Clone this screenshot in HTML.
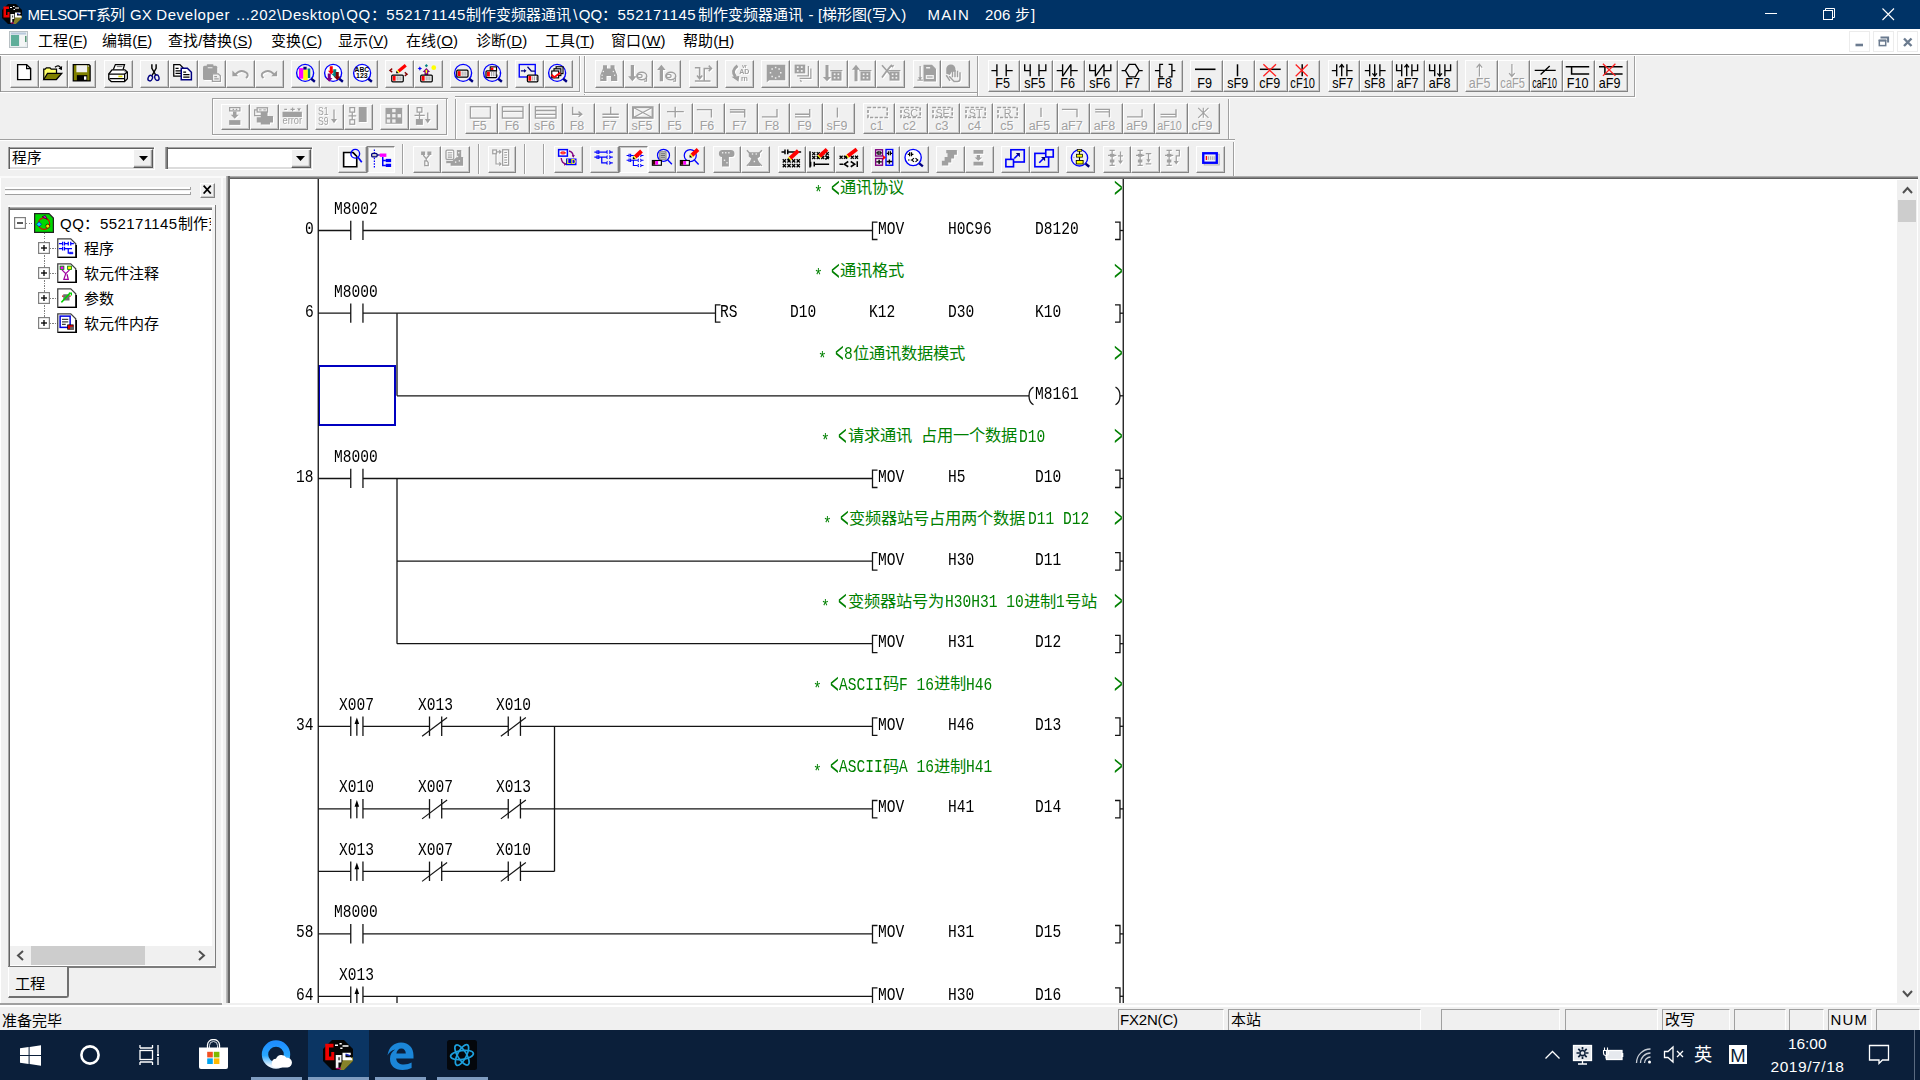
<!DOCTYPE html>
<html lang="zh-CN">
<head>
<meta charset="utf-8">
<title>MELSOFT GX Developer</title>
<style>
html,body{margin:0;padding:0;}
body{width:1920px;height:1080px;position:relative;overflow:hidden;background:#f0f0f0;font-family:"Liberation Sans",sans-serif;font-size:15px;color:#000;}
div,span,svg{position:absolute;box-sizing:border-box;}
.l{overflow:hidden}
.t{white-space:pre;line-height:1;}
.u{position:static;text-decoration:underline;}
.b{border-top:1px solid #fff;border-left:1px solid #fff;border-right:1px solid #848484;border-bottom:1px solid #848484;background:#f0f0f0;box-shadow:inset -1px -1px 0 #c6c6c6;}
.b.p{border-top:1px solid #848484;border-left:1px solid #848484;border-right:1px solid #fff;border-bottom:1px solid #fff;background:#f8f8f8;box-shadow:inset 1px 1px 0 #c6c6c6;}
.i{overflow:visible}
.b.p .i{transform:translate(1.25px,1.25px)}
.em{filter:drop-shadow(1.1px 1.1px 0 #fff)}
.lb{font-family:"Liberation Sans",sans-serif;line-height:1;white-space:pre;text-align:center;transform-origin:50% 50%}
.m{font-family:"Liberation Mono",monospace;font-size:17.6px;line-height:1;white-space:pre;transform-origin:0 0;transform:scaleX(0.8286);color:#000}
.c{font-family:"Liberation Serif",serif;font-size:16.25px;line-height:1;white-space:pre;}
.g{color:#008000}
.ui{font-size:15px;line-height:1;white-space:pre;}
.pane{border-top:1.25px solid #a0a0a0;border-left:1.25px solid #a0a0a0;border-right:1.25px solid #fff;border-bottom:0;}
</style>
</head>
<body>
<div class="" style="left:0px;top:0px;width:1920px;height:29px;background:#003366"></div>
<svg style="left:2px;top:4px" width="20" height="20" viewBox="0 0 20 20"><path d="M6 0h8l6 6v8l-6 6H6l-6-6V6z" fill="#050505"/><path d="M13.500 12.500l6.500-1v2.500l-6 6h-3z" fill="#86822a"/><path d="M1.500 2.500h5.500v2.500h-3v6h1.500v-3h2v5.500h-6z" fill="#f00000"/><path d="M8.500 10h3.800v5h-2v3.800h-1.800zM10.300 11.500v2h.8v-2z" fill="#f4f4f4"/><path d="M13 8.500h5.500v1.500h-3.500v1.500h3.500l1 1v1h-6.500z" fill="#fff"/><path d="M8 3.500h2M11 2.500h1.500M13 4h4M11.500 5.500h1.500" stroke="#fff" stroke-width="1.100"/><path d="M9 18.500h3v1h-3z" fill="#c00070"/><path d="M15 9.500l3 1" stroke="#2030c0" stroke-width="1"/></svg>
<span class="t ui" style="left:27.5px;top:7px;letter-spacing:-0.372px;color:#fff;font-size:15px">MELSOFT系列</span>
<span class="t ui" style="left:130px;top:7px;letter-spacing:0.031px;color:#fff;font-size:15px">GX</span>
<span class="t ui" style="left:156.25px;top:7px;letter-spacing:0.597px;color:#fff;font-size:15px">Developer</span>
<span class="t ui" style="left:236.25px;top:7px;letter-spacing:0.523px;color:#fff;font-size:15px">...202\Desktop\</span>
<span class="t ui" style="left:346.25px;top:7px;letter-spacing:0.469px;color:#fff;font-size:15px">QQ：</span>
<span class="t ui" style="left:386.25px;top:7px;letter-spacing:0.642px;color:#fff;font-size:15px">552171145</span>
<span class="t ui" style="left:466.25px;top:7px;letter-spacing:0px;color:#fff;font-size:15px">制作变频器通讯</span>
<span class="t ui" style="left:573.25px;top:7px;letter-spacing:0.828px;color:#fff;font-size:15px">\</span>
<span class="t ui" style="left:578.75px;top:7px;letter-spacing:-0.031px;color:#fff;font-size:15px">QQ：</span>
<span class="t ui" style="left:617.5px;top:7px;letter-spacing:0.531px;color:#fff;font-size:15px">552171145</span>
<span class="t ui" style="left:697.5px;top:7px;letter-spacing:0px;color:#fff;font-size:15px">制作变频器通讯</span>
<span class="t ui" style="left:808.5px;top:7px;letter-spacing:0.5px;color:#fff;font-size:15px">-</span>
<span class="t ui" style="left:818px;top:7px;letter-spacing:-0.115px;color:#fff;font-size:15px">[梯形图(写入)</span>
<span class="t ui" style="left:927.5px;top:7px;letter-spacing:1.25px;color:#fff;font-size:15px">MAIN</span>
<span class="t ui" style="left:985px;top:7px;letter-spacing:0.156px;color:#fff;font-size:15px">206</span>
<span class="t ui" style="left:1015px;top:7px;letter-spacing:0.914px;color:#fff;font-size:15px">步]</span>
<svg style="left:1740px;top:0" width="180" height="29" viewBox="0 0 180 29" fill="none" stroke="#fff" stroke-width="1.1"><path d="M25 13.5h12" stroke-width="1"/><rect x="83.5" y="10.5" width="9" height="9" stroke-width="1"/><path d="M85.5 10.5v-2h9v9h-2" stroke-width="1"/><path d="M142.5 8.5l11.5 11.5M154 8.5l-11.5 11.5"/></svg>
<div class="" style="left:0px;top:29px;width:1920px;height:25px;background:#fff"></div>
<svg style="left:9px;top:31px" width="19" height="17" viewBox="0 0 19 17"><rect x="0.5" y="0.5" width="18" height="16" fill="#e8eef0" stroke="#b8c0c4"/><rect x="2" y="4" width="8" height="11" fill="#5fae9a"/><rect x="2" y="1.5" width="15" height="2" fill="#b9c9dc"/><rect x="11" y="4" width="5" height="11" fill="#f4f6f6"/><rect x="16" y="5" width="1.5" height="6" fill="#5a9a78"/></svg>
<span class="t ui" style="left:38.3px;top:33.2px">工程(<span class="u">F</span>)</span>
<span class="t ui" style="left:102.3px;top:33.2px">编辑(<span class="u">E</span>)</span>
<span class="t ui" style="left:168.3px;top:33.2px">查找/替换(<span class="u">S</span>)</span>
<span class="t ui" style="left:271.3px;top:33.2px">变换(<span class="u">C</span>)</span>
<span class="t ui" style="left:338.3px;top:33.2px">显示(<span class="u">V</span>)</span>
<span class="t ui" style="left:406.3px;top:33.2px">在线(<span class="u">O</span>)</span>
<span class="t ui" style="left:476.3px;top:33.2px">诊断(<span class="u">D</span>)</span>
<span class="t ui" style="left:545.3px;top:33.2px">工具(<span class="u">T</span>)</span>
<span class="t ui" style="left:611.3px;top:33.2px">窗口(<span class="u">W</span>)</span>
<span class="t ui" style="left:683.3px;top:33.2px">帮助(<span class="u">H</span>)</span>
<div class="" style="left:1849.2px;top:31.4px;width:21.2px;height:20.4px;background:#fff;border:1.25px solid #ececec"></div>
<div class="" style="left:1873px;top:31.4px;width:21.2px;height:20.4px;background:#fff;border:1.25px solid #ececec"></div>
<div class="" style="left:1896.8px;top:31.4px;width:21.2px;height:20.4px;background:#fff;border:1.25px solid #ececec"></div>
<svg style="left:1849px;top:31px" width="71" height="22" viewBox="0 0 71 22" fill="none" stroke="#6b7b8f"><path d="M6.5 14h7.5" stroke-width="2.6"/><path d="M31.5 6.6h7.6v5" stroke-width="2"/><rect x="30.3" y="9.8" width="6.4" height="4.8" stroke-width="1.5"/><path d="M29.6 9.3h7.8" stroke-width="1.8"/><path d="M55 7.5l7.5 7.5M62.5 7.5l-7.5 7.5" stroke-width="2.4"/></svg>
<div class="l" style="left:0px;top:53.6px;width:1920px;height:1.25px;background:#a0a0a0"></div>
<div class="l" style="left:0px;top:54.8px;width:1920px;height:1.25px;background:#fff"></div>
<div class="b" style="left:10.2px;top:60.4px;width:28.75px;height:27.2px"><svg class="i" style="left:3.15px;top:2.7px" width="20" height="18.75" viewBox="0 0 16 15"><path d="M2.9 .5h7.2l3.2 3.2v8.8H2.900z" fill="#fff" stroke="#000" stroke-width="1.1"/><path d="M10.100 .5v3.200h3.200" fill="none" stroke="#000" stroke-width="1"/></svg></div>
<div class="b" style="left:38.95px;top:60.4px;width:28.75px;height:27.2px"><svg class="i" style="left:3.15px;top:2.7px" width="20" height="18.75" viewBox="0 0 16 15"><path d="M9.600 2.600q2.800-2.600 4.800 .8" fill="none" stroke="#000" stroke-width="1"/><path d="M15.300 1.600l-.2 3.300l-2.800-1.300z" fill="#000"/><path d="M.6 12.400V4.100h1.100l1-1.100h2.900l1 1.100h4.200v3" fill="#ffff66" stroke="#000" stroke-width="1"/><path d="M.6 12.400l3-4.900h11.400l-4.300 4.900z" fill="#808000" stroke="#000" stroke-width="1"/></svg></div>
<div class="b" style="left:67.7px;top:60.4px;width:28.75px;height:27.2px"><svg class="i" style="left:3.15px;top:2.7px" width="20" height="18.75" viewBox="0 0 16 15"><path d="M1 .5h12.600l.9 .9v12.100H1z" fill="#808000" stroke="#000" stroke-width="1"/><rect x="3.500" y="1" width="8.600" height="5.600" fill="#f0f0f0"/><rect x="3.900" y="8.900" width="8.300" height="4.700" fill="#000"/><rect x="9.600" y="9.900" width="1.900" height="2.700" fill="#fff"/><rect x="12.600" y="1.200" width="1" height="1" fill="#c0c0c0"/></svg></div>
<div class="b" style="left:103.95px;top:60.4px;width:28.75px;height:27.2px"><svg class="i" style="left:3.15px;top:2.7px" width="20" height="18.75" viewBox="0 0 16 15"><path d="M4.200 4.600l1.700-4.100h7.300l-1.200 4.100" fill="#fff" stroke="#000" stroke-width="1"/><path d="M7 2h4.500" stroke="#808080" stroke-width="1"/><path d="M.6 8l2.600-3.400h10.300l2 1.800v5.300l-2.300 2.300H2.600l-2-1.800z" fill="#fff" stroke="#000" stroke-width="1"/><path d="M.6 8h12.700l2.200-1.600M13.300 8v5.800M1.200 11.700h12" fill="none" stroke="#000" stroke-width="1"/><rect x="8.300" y="9.300" width="3.200" height="1.300" fill="#dcdc00"/><circle cx="13.800" cy="6" r="0.700" fill="#808080"/></svg></div>
<div class="b" style="left:140.2px;top:60.4px;width:28.75px;height:27.2px"><svg class="i" style="left:3.15px;top:2.7px" width="20" height="18.75" viewBox="0 0 16 15"><path d="M6.300 .2v3.200l3.400 6M9.700 .2v3.200l-3.400 6" fill="none" stroke="#000" stroke-width="1.150"/><ellipse cx="5" cy="11.300" rx="1.700" ry="2.300" fill="none" stroke="#000080" stroke-width="1.100" transform="rotate(25 5 11.300)"/><ellipse cx="10.300" cy="10.900" rx="1.700" ry="2.300" fill="none" stroke="#000080" stroke-width="1.100" transform="rotate(-15 10.300 10.900)"/></svg></div>
<div class="b" style="left:168.95px;top:60.4px;width:28.75px;height:27.2px"><svg class="i" style="left:3.15px;top:2.7px" width="20" height="18.75" viewBox="0 0 16 15"><path d="M.6 .5h4.900l2.500 2.500v6.600H.6z" fill="#fff" stroke="#000" stroke-width="1"/><path d="M2 3.500h2.500M2 5.500h4.500M2 7.500h4.500" stroke="#000" stroke-width="1"/><path d="M6.600 3.400h4.900l3.200 3.200v6H6.600z" fill="#fff" stroke="#000080" stroke-width="1.200"/><path d="M8.200 6.400h2.300M8.200 8.400h5M8.200 10.400h5" stroke="#000" stroke-width="1"/></svg></div>
<div class="b" style="left:197.7px;top:60.4px;width:28.75px;height:27.2px"><svg class="i em" style="left:3.15px;top:2.7px" width="20" height="18.75" viewBox="0 0 16 15"><rect x=".8" y="1.400" width="11.400" height="11.400" rx="1.200" fill="#a0a0a0"/><rect x="3.800" y=".1" width="5.400" height="2.600" rx=".6" fill="#a0a0a0"/><rect x="4.600" y="2.600" width="3.800" height=".8" fill="#f0f0f0"/><path d="M8.300 7.800h4.700l1.700 1.700v4.300H8.300z" fill="#f0f0f0" stroke="#a0a0a0" stroke-width="1"/><path d="M9.800 10h2.200M9.800 11.800h3.600" stroke="#a0a0a0" stroke-width="1"/></svg></div>
<div class="b" style="left:226.45px;top:60.4px;width:28.75px;height:27.2px"><svg class="i em" style="left:3.15px;top:2.7px" width="20" height="18.75" viewBox="0 0 16 15"><path d="M3.400 8.400q4.300-4.800 9-1.400q2.200 2-.4 4.200" fill="none" stroke="#a0a0a0" stroke-width="1.500"/><path d="M1.100 5.200v4.600h4.700z" fill="#a0a0a0"/></svg></div>
<div class="b" style="left:255.2px;top:60.4px;width:28.75px;height:27.2px"><svg class="i em" style="left:3.15px;top:2.7px" width="20" height="18.75" viewBox="0 0 16 15"><g transform="translate(15.600 0) scale(-1 1)"><path d="M3.400 8.400q4.300-4.800 9-1.400q2.200 2-.4 4.200" fill="none" stroke="#a0a0a0" stroke-width="1.500"/><path d="M1.100 5.200v4.600h4.700z" fill="#a0a0a0"/></g></svg></div>
<div class="b" style="left:291.45px;top:60.4px;width:28.75px;height:27.2px"><svg class="i" style="left:3.15px;top:2.7px" width="20" height="18.75" viewBox="0 0 16 15"><rect x="2.400" y="3.300" width="3.600" height="8.400" fill="#ff00ff"/><rect x="9.200" y="3.600" width="2.200" height="7.600" fill="#008080"/><rect x="5.900" y="4.600" width="3.500" height="8.200" fill="#ffff00"/><rect x="5.900" y="2.200" width="2.600" height="2.300" fill="#000080"/><circle cx="7.3" cy="7.1" r="6.8" fill="none" stroke="#0000ff" stroke-width="1.1"/><path d="M12.2 11.8l2.9 2.4" stroke="#000080" stroke-width="1.9"/></svg></div>
<div class="b" style="left:320.2px;top:60.4px;width:28.75px;height:27.2px"><svg class="i" style="left:3.15px;top:2.7px" width="20" height="18.75" viewBox="0 0 16 15"><circle cx="7.3" cy="7.1" r="6.8" fill="#fff" stroke="#0000ff" stroke-width="1.1"/><path d="M12.2 11.8l2.9 2.4" stroke="#000080" stroke-width="1.9"/><path d="M4.6 1.8h2.4v3.6h1.44l-2.64 3l-2.64 -3h1.44z" fill="#ff0000"/><path d="M7.4 4.2h2.4v3.6h1.44l-2.64 3l-2.64 -3h1.44z" fill="#008080"/><path d="M3 7.6h2.4v3.6h1.44l-2.64 3l-2.64 -3h1.44z" fill="#800080"/><path d="M9.4 6.4h2.4v3.6h1.44l-2.64 3l-2.64 -3h1.44z" fill="#800000"/></svg></div>
<div class="b" style="left:348.95px;top:60.4px;width:28.75px;height:27.2px"><svg class="i" style="left:3.15px;top:2.7px" width="20" height="18.75" viewBox="0 0 16 15"><circle cx="7.3" cy="7.1" r="6.8" fill="#fff" stroke="#0000ff" stroke-width="1.1"/><path d="M12.2 11.8l2.9 2.4" stroke="#000080" stroke-width="1.9"/><text x="7.1" y="6.7" font-family="Liberation Sans" font-size="5.4" font-weight="bold" text-anchor="middle" fill="#000" stroke="none">ABC</text><text x="7.1" y="11.5" font-family="Liberation Sans" font-size="5.6" font-weight="bold" text-anchor="middle" fill="#000" stroke="none">123</text></svg></div>
<div class="b" style="left:385.2px;top:60.4px;width:28.75px;height:27.2px"><svg class="i" style="left:3.15px;top:2.7px" width="20" height="18.75" viewBox="0 0 16 15"><path d="M12.57 -0.10L6.77 4.74L8.43 6.73L14.23 1.90z" fill="#ff0000"/><path d="M6.77 4.74L6.00 5.38L7.66 7.37L8.43 6.73z" fill="#ffff00"/><path d="M6.00 5.38L5.60 7.40L7.66 7.37z" fill="#000"/><path d="M2.600 3.700l-1.900 1.400l1.900 1.400" fill="none" stroke="#800000" stroke-width="1"/><path d="M12.600 6.700l1.900 1.400l-1.900 1.400" fill="none" stroke="#800000" stroke-width="1"/><rect x="2.2" y="8.8" width="9.2" height="5.4" rx="0.8" fill="#fff" stroke="#000" stroke-width="1"/><rect x="3" y="9.6" width="2.3" height="3.8" fill="#ff0000"/><path d="M6.5 9.8v3.4M8 9.8v3.4M9.5 9.8v3.4" stroke="#9a9a9a" stroke-width="0.8"/></svg></div>
<div class="b" style="left:413.95px;top:60.4px;width:28.75px;height:27.2px"><svg class="i" style="left:3.15px;top:2.7px" width="20" height="18.75" viewBox="0 0 16 15"><path d="M6.700 0l1.300 1.300l-1.300 1.300l-1.300-1.300z" fill="#008080"/><path d="M1.500 1.700l.6 1.200l1.200 .6l-1.200 .6l-.6 1.200l-.6-1.200l-1.200-.6l1.200-.6z" fill="#0000ff"/><circle cx="12.600" cy="2.900" r="1.900" fill="#ffff00"/><path d="M6.700 3.200l3 3.200h-1.500v2.500h-3v-2.500h-1.500z" fill="#800080"/><path d="M6.700 4.300l1.100 1.400h-.6v1.600h-1v-1.600h-.6z" fill="#ffff00"/><rect x="2.2" y="8.8" width="9.2" height="5.4" rx="0.8" fill="#fff" stroke="#000" stroke-width="1"/><rect x="3" y="9.6" width="2.3" height="3.8" fill="#ff0000"/><path d="M6.5 9.8v3.4M8 9.8v3.4M9.5 9.8v3.4" stroke="#9a9a9a" stroke-width="0.8"/></svg></div>
<div class="b" style="left:450.2px;top:60.4px;width:28.75px;height:27.2px"><svg class="i" style="left:3.15px;top:2.7px" width="20" height="18.75" viewBox="0 0 16 15"><circle cx="7.3" cy="7.1" r="6.8" fill="none" stroke="#0000ff" stroke-width="1.1"/><path d="M12.2 11.8l2.9 2.4" stroke="#000080" stroke-width="1.9"/><rect x="2.2" y="4.9" width="9" height="5.5" rx="0.8" fill="#fff" stroke="#000" stroke-width="1"/><rect x="3" y="5.7" width="2.3" height="3.9" fill="#ff0000"/><path d="M6.5 5.9v3.5M8 5.9v3.5M9.5 5.9v3.5" stroke="#9a9a9a" stroke-width="0.8"/></svg></div>
<div class="b" style="left:478.95px;top:60.4px;width:28.75px;height:27.2px"><svg class="i" style="left:3.15px;top:2.7px" width="20" height="18.75" viewBox="0 0 16 15"><circle cx="7.3" cy="7.1" r="6.8" fill="none" stroke="#0000ff" stroke-width="1.1"/><path d="M12.2 11.8l2.9 2.4" stroke="#000080" stroke-width="1.9"/><rect x="5.800" y="2.300" width="5" height="3" fill="#fff" stroke="#000" stroke-width=".9"/><rect x="6.300" y="2.800" width="2" height="2" fill="#ff0000"/><rect x="2.4" y="5.4" width="8.6" height="5.4" rx="0.8" fill="#fff" stroke="#000" stroke-width="1"/><rect x="3.2" y="6.2" width="2.3" height="3.8" fill="#ff0000"/><path d="M6.7 6.4v3.4M8.2 6.4v3.4M9.7 6.4v3.4" stroke="#9a9a9a" stroke-width="0.8"/><path d="M11.200 7.200h2.300" stroke="#000" stroke-width=".9"/><rect x="11" y="5.800" width="2.200" height="2.600" fill="#fff"/></svg></div>
<div class="b" style="left:515.2px;top:60.4px;width:28.75px;height:27.2px"><svg class="i" style="left:3.15px;top:2.7px" width="20" height="18.75" viewBox="0 0 16 15"><rect x=".2" y=".4" width="12.800" height="10" fill="none" stroke="#0000ff" stroke-width="1.100"/><path d="M1.500 5.400h3.500M6.800 2.200l3 3.400h3" fill="none" stroke="#000080" stroke-width="1"/><path d="M4 3.900l2 1.500l-2 1.500z" fill="#000080"/><rect x="6.7" y="8.8" width="8.4" height="5.4" rx="0.8" fill="#fff" stroke="#000" stroke-width="1"/><rect x="7.5" y="9.6" width="2.3" height="3.8" fill="#ff0000"/><path d="M11 9.8v3.4M12.5 9.8v3.4M14 9.8v3.4" stroke="#9a9a9a" stroke-width="0.8"/></svg></div>
<div class="b" style="left:543.95px;top:60.4px;width:28.75px;height:27.2px"><svg class="i" style="left:3.15px;top:2.7px" width="20" height="18.75" viewBox="0 0 16 15"><circle cx="7.3" cy="7.1" r="6.8" fill="none" stroke="#0000ff" stroke-width="1.1"/><path d="M12.2 11.8l2.9 2.4" stroke="#000080" stroke-width="1.9"/><rect x="6.500" y="2.200" width="5.500" height="5.500" fill="#fff" stroke="#000" stroke-width=".9"/><rect x="4.800" y="3.800" width="5.500" height="5.500" fill="#d8d8d8" stroke="#000" stroke-width=".9"/><rect x="3" y="5.600" width="5.500" height="5.500" fill="#fff" stroke="#000" stroke-width=".9"/><path d="M2.800 8.600l2.200 2l4.800-3.600" fill="none" stroke="#ff0000" stroke-width="1.500"/></svg></div>
<div class="l" style="left:0px;top:91px;width:580px;height:1px;background:#a0a0a0"></div>
<div class="l" style="left:0px;top:92px;width:580px;height:1px;background:#fff"></div>
<div class="l" style="left:0px;top:56px;width:1.1px;height:36px;background:#8c8c8c"></div>
<div class="l" style="left:579px;top:56px;width:1px;height:36px;background:#a0a0a0"></div>
<div class="l" style="left:580px;top:56px;width:1px;height:36px;background:#fff"></div>
<div class="l" style="left:584px;top:56px;width:1px;height:39px;background:#a0a0a0"></div>
<div class="l" style="left:585px;top:56px;width:1px;height:39px;background:#fff"></div>
<div class="b" style="left:595.2px;top:60.4px;width:28.75px;height:27.2px"><svg class="i em" style="left:3.15px;top:2.7px" width="20" height="18.75" viewBox="0 0 16 15"><path d="M3.200 1h3.200v2.500h2.800V1h3.200v2.500l2.200 5.500v4.500H9.600V9.500H6v4H1V9l2.200-5.500z" fill="#a0a0a0"/><rect x="3" y="5.5" width="1" height="1" fill="#f0f0f0"/><rect x="2" y="8.5" width="1" height="1" fill="#f0f0f0"/><rect x="2" y="11" width="1" height="1" fill="#f0f0f0"/><rect x="11" y="5.5" width="1" height="1" fill="#f0f0f0"/><rect x="12" y="8.5" width="1" height="1" fill="#f0f0f0"/></svg></div>
<div class="b" style="left:623.95px;top:60.4px;width:28.75px;height:27.2px"><svg class="i em" style="left:3.15px;top:2.7px" width="20" height="18.75" viewBox="0 0 16 15"><path d="M2.200 .8h2.600v9h2.100l-3.400 4l-3.400-4h2.100z" fill="#a0a0a0"/><ellipse cx="11" cy="9.600" rx="4" ry="3" fill="none" stroke="#a0a0a0" stroke-width="1.100"/><ellipse cx="9.400" cy="9.600" rx="1.900" ry="1.300" fill="none" stroke="#a0a0a0" stroke-width=".9"/><path d="M14.800 9.500v4.200h-2" fill="none" stroke="#a0a0a0" stroke-width="1"/></svg></div>
<div class="b" style="left:652.7px;top:60.4px;width:28.75px;height:27.2px"><svg class="i em" style="left:3.15px;top:2.7px" width="20" height="18.75" viewBox="0 0 16 15"><path d="M3.500 .5l3.400 4.200H4.800v9H2.200v-9H.1z" fill="#a0a0a0"/><ellipse cx="11" cy="9.600" rx="4" ry="3" fill="none" stroke="#a0a0a0" stroke-width="1.100"/><ellipse cx="9.400" cy="9.600" rx="1.900" ry="1.300" fill="none" stroke="#a0a0a0" stroke-width=".9"/><path d="M14.800 9.500v4.200h-2" fill="none" stroke="#a0a0a0" stroke-width="1"/></svg></div>
<div class="b" style="left:688.95px;top:60.4px;width:28.75px;height:27.2px"><svg class="i em" style="left:3.15px;top:2.7px" width="20" height="18.75" viewBox="0 0 16 15"><path d="M1.500 3h3.800v8.500M3.200 9.200l2.100 2.600l2.100-2.600M1.500 13.500h12.500M9 13.500V3.500h5.500M12.600 1.300l2.200 2.200l-2.200 2.200" fill="none" stroke="#a0a0a0" stroke-width="1.200"/></svg></div>
<div class="b" style="left:725.2px;top:60.4px;width:28.75px;height:27.2px"><svg class="i em" style="left:3.15px;top:2.7px" width="20" height="18.75" viewBox="0 0 16 15"><path d="M6.800 1.400q-5.600 4-1.600 8.800" fill="none" stroke="#a0a0a0" stroke-width="2.300"/><path d="M2 10.200l6.200-.6l-.6 4.600z" fill="#a0a0a0"/><text x="12.3" y="3" font-family="Liberation Sans" font-size="4.2" font-weight="bold" text-anchor="middle" fill="#a0a0a0" stroke="none">vr</text><text x="12.3" y="8.3" font-family="Liberation Sans" font-size="5.6" font-weight="bold" text-anchor="middle" fill="#a0a0a0" stroke="none">AD</text><text x="12.3" y="13.3" font-family="Liberation Sans" font-size="5.6" font-weight="bold" text-anchor="middle" fill="#a0a0a0" stroke="none">rn</text></svg></div>
<div class="b" style="left:761.45px;top:60.4px;width:28.75px;height:27.2px"><svg class="i em" style="left:3.15px;top:2.7px" width="20" height="18.75" viewBox="0 0 16 15"><path d="M.6 .5h14.800v12.500H2.600l-2 1.500z" fill="#a0a0a0"/><rect x="7.1" y="2.2" width="1.2" height="1.2" fill="#f0f0f0"/><rect x="9.9" y="3.4" width="1.2" height="1.2" fill="#f0f0f0"/><rect x="11.2" y="6.4" width="1.2" height="1.2" fill="#f0f0f0"/><rect x="9.9" y="9.4" width="1.2" height="1.2" fill="#f0f0f0"/><rect x="7.1" y="10.6" width="1.2" height="1.2" fill="#f0f0f0"/><rect x="4.3" y="9.4" width="1.2" height="1.2" fill="#f0f0f0"/><rect x="3" y="6.4" width="1.2" height="1.2" fill="#f0f0f0"/><rect x="4.3" y="3.4" width="1.2" height="1.2" fill="#f0f0f0"/></svg></div>
<div class="b" style="left:790.2px;top:60.4px;width:28.75px;height:27.2px"><svg class="i em" style="left:3.15px;top:2.7px" width="20" height="18.75" viewBox="0 0 16 15"><path d="M4.500 11.500h9v-8M2.500 9.500h9v-8" fill="none" stroke="#a0a0a0" stroke-width="1"/><path d="M5 13l1 1.200" stroke="#a0a0a0"/><rect x=".5" y=".5" width="8.500" height="7" fill="#a0a0a0"/><rect x="2.3" y="1.8" width="1.4" height="1.4" fill="#f0f0f0"/><rect x="5.5" y="1.8" width="1.4" height="1.4" fill="#f0f0f0"/><rect x="2.3" y="4.8" width="1.4" height="1.4" fill="#f0f0f0"/><rect x="5.5" y="4.8" width="1.4" height="1.4" fill="#f0f0f0"/></svg></div>
<div class="b" style="left:818.95px;top:60.4px;width:28.75px;height:27.2px"><svg class="i em" style="left:3.15px;top:2.7px" width="20" height="18.75" viewBox="0 0 16 15"><path d="M2 .8h2.400v9.500h2.100l-3.300 3.500l-3.300-3.500H2z" fill="#a0a0a0"/><path d="M5.800 5.300h9.700" stroke="#a0a0a0" stroke-width="1"/><rect x="6.800" y="6" width="8" height="7.300" fill="#a0a0a0"/><rect x="8.6" y="7.5" width="1.4" height="1.4" fill="#f0f0f0"/><rect x="11.6" y="7.5" width="1.4" height="1.4" fill="#f0f0f0"/><rect x="8.6" y="10.3" width="1.4" height="1.4" fill="#f0f0f0"/><rect x="11.6" y="10.3" width="1.4" height="1.4" fill="#f0f0f0"/></svg></div>
<div class="b" style="left:847.7px;top:60.4px;width:28.75px;height:27.2px"><svg class="i em" style="left:3.15px;top:2.7px" width="20" height="18.75" viewBox="0 0 16 15"><path d="M3.200 .5l3.300 4H4.400v9.300H2V4.500H-.1z" fill="#a0a0a0"/><path d="M5.800 5.300h9.700" stroke="#a0a0a0" stroke-width="1"/><rect x="6.800" y="6" width="8" height="7.300" fill="#a0a0a0"/><rect x="8.6" y="7.5" width="1.4" height="1.4" fill="#f0f0f0"/><rect x="11.6" y="7.5" width="1.4" height="1.4" fill="#f0f0f0"/><rect x="8.6" y="10.3" width="1.4" height="1.4" fill="#f0f0f0"/><rect x="11.6" y="10.3" width="1.4" height="1.4" fill="#f0f0f0"/></svg></div>
<div class="b" style="left:876.45px;top:60.4px;width:28.75px;height:27.2px"><svg class="i em" style="left:3.15px;top:2.7px" width="20" height="18.75" viewBox="0 0 16 15"><path d="M.8 1l8 9M8.800 .8q-2 1.500-8 10" fill="none" stroke="#a0a0a0" stroke-width="1.300"/><path d="M7.500 1.500l3-1l-1 2.500z" fill="#a0a0a0"/><path d="M5.800 5.300h9.700" stroke="#a0a0a0" stroke-width="1"/><rect x="6.800" y="6" width="8" height="7.300" fill="#a0a0a0"/><rect x="8.6" y="7.5" width="1.4" height="1.4" fill="#f0f0f0"/><rect x="11.6" y="7.5" width="1.4" height="1.4" fill="#f0f0f0"/><rect x="8.6" y="10.3" width="1.4" height="1.4" fill="#f0f0f0"/><rect x="11.6" y="10.3" width="1.4" height="1.4" fill="#f0f0f0"/></svg></div>
<div class="b" style="left:912.7px;top:60.4px;width:28.75px;height:27.2px"><svg class="i em" style="left:3.15px;top:2.7px" width="20" height="18.75" viewBox="0 0 16 15"><path d="M2.500 1.500v11.500M.3 12.800h4.400" stroke="#a0a0a0" stroke-width="1" fill="none"/><path d="M.8 10.500l1.700 2.300l1.700-2.300z" fill="#a0a0a0"/><path d="M5.200 .5h6.800l3.200 3.200v10.300h-10z" fill="#a0a0a0"/><rect x="7.300" y="2.400" width="3.200" height="1.200" fill="#f0f0f0"/><rect x="7" y="8.800" width="6.500" height="3.200" fill="#f0f0f0"/><path d="M8 10.400h4.500" stroke="#a0a0a0" stroke-width=".9"/></svg></div>
<div class="b" style="left:941.45px;top:60.4px;width:28.75px;height:27.2px"><svg class="i em" style="left:3.15px;top:2.7px" width="20" height="18.75" viewBox="0 0 16 15"><g transform="translate(-1.800 0)"><path d="M2 3.800a3.700 3.500 0 0 1 7.400 0v2.400h-3l-1.500 2.500l-2.900-1z" fill="#a0a0a0"/><path d="M7 5.500v5M9 4.800v5.700M11 5.300v5.200M13 6.500v5.500q0 2-2 2H8.300L4.300 9.800M2 9l3 4.500" fill="none" stroke="#a0a0a0" stroke-width="1.150"/></g></svg></div>
<div class="l" style="left:584px;top:92px;width:393px;height:1px;background:#a0a0a0"></div>
<div class="l" style="left:584px;top:93px;width:393px;height:1px;background:#fff"></div>
<div class="l" style="left:455px;top:96px;width:1181px;height:1px;background:#a0a0a0"></div>
<div class="l" style="left:455px;top:97px;width:1181px;height:1px;background:#fff"></div>
<div class="l" style="left:977px;top:56px;width:1px;height:40px;background:#a0a0a0"></div>
<div class="l" style="left:978px;top:56px;width:1px;height:40px;background:#fff"></div>
<div class="b" style="left:987.7px;top:60.4px;width:32.5px;height:31.8px"><svg style="left:-1.25px;top:-1.25px" width="32.5" height="31.25" viewBox="0 0 32.5 31.25" fill="none" stroke="#000" stroke-width="1.35"><path d="M4.4 10.6H9.9M9.9 4.3V16.3M19.2 4.3V16.3M19.2 10.6H25.7"/></svg><span class="lb" style="left:-6px;right:-6px;top:14.5px;color:#000;font-size:14.4px;transform:translateX(-1.6px) scaleX(0.875)">F5</span></div>
<div class="b" style="left:1020.2px;top:60.4px;width:32.5px;height:31.8px"><svg style="left:-1.25px;top:-1.25px" width="32.5" height="31.25" viewBox="0 0 32.5 31.25" fill="none" stroke="#000" stroke-width="1.35"><path d="M4.7 4.3V10.6H10.2M10.2 4.3V16.3M19 4.3V16.3M19 10.6H25.8V4.3"/></svg><span class="lb" style="left:-6px;right:-6px;top:14.5px;color:#000;font-size:14.4px;transform:translateX(-1.6px) scaleX(0.875)">sF5</span></div>
<div class="b" style="left:1052.7px;top:60.4px;width:32.5px;height:31.8px"><svg style="left:-1.25px;top:-1.25px" width="32.5" height="31.25" viewBox="0 0 32.5 31.25" fill="none" stroke="#000" stroke-width="1.35"><path d="M4.7 10.6H10.6M10.6 4.3V16.3M10.6 16.3L18.9 4.3M18.9 4.3V16.3M18.9 10.6H25.7"/></svg><span class="lb" style="left:-6px;right:-6px;top:14.5px;color:#000;font-size:14.4px;transform:translateX(-1.6px) scaleX(0.875)">F6</span></div>
<div class="b" style="left:1085.2px;top:60.4px;width:32.5px;height:31.8px"><svg style="left:-1.25px;top:-1.25px" width="32.5" height="31.25" viewBox="0 0 32.5 31.25" fill="none" stroke="#000" stroke-width="1.35"><path d="M4.7 4.3V10.6H10.4M10.4 4.3V16.3M10.4 16.3L19 4.3M19 4.3V16.3M19 10.6H25.8V4.3"/></svg><span class="lb" style="left:-6px;right:-6px;top:14.5px;color:#000;font-size:14.4px;transform:translateX(-1.6px) scaleX(0.875)">sF6</span></div>
<div class="b" style="left:1117.7px;top:60.4px;width:32.5px;height:31.8px"><svg style="left:-1.25px;top:-1.25px" width="32.5" height="31.25" viewBox="0 0 32.5 31.25" fill="none" stroke="#000" stroke-width="1.35"><path d="M4.6 10.6H8.4M22.1 10.6H25.7"/><path d="M12.2 4.3h6.1l3.8 6.3l-3.8 6.3h-6.1l-3.8-6.3z"/></svg><span class="lb" style="left:-6px;right:-6px;top:14.5px;color:#000;font-size:14.4px;transform:translateX(-1.6px) scaleX(0.875)">F7</span></div>
<div class="b" style="left:1150.2px;top:60.4px;width:32.5px;height:31.8px"><svg style="left:-1.25px;top:-1.25px" width="32.5" height="31.25" viewBox="0 0 32.5 31.25" fill="none" stroke="#000" stroke-width="1.35"><path d="M4.9 10.6H9.8M13.1 4.3H9.8V16.900000000000002H13.1M18.6 4.3H21.9V16.900000000000002H18.6M21.9 10.6H25.4"/></svg><span class="lb" style="left:-6px;right:-6px;top:14.5px;color:#000;font-size:14.4px;transform:translateX(-1.6px) scaleX(0.875)">F8</span></div>
<div class="b" style="left:1190.2px;top:60.4px;width:32.5px;height:31.8px"><svg style="left:-1.25px;top:-1.25px" width="32.5" height="31.25" viewBox="0 0 32.5 31.25" fill="none" stroke="#000" stroke-width="1.35"><path d="M5 9.3H25.5" stroke-width="1.6"/></svg><span class="lb" style="left:-6px;right:-6px;top:14.5px;color:#000;font-size:14.4px;transform:translateX(-1.6px) scaleX(0.875)">F9</span></div>
<div class="b" style="left:1222.7px;top:60.4px;width:32.5px;height:31.8px"><svg style="left:-1.25px;top:-1.25px" width="32.5" height="31.25" viewBox="0 0 32.5 31.25" fill="none" stroke="#000" stroke-width="1.35"><path d="M15.5 4.3V16.3" stroke-width="1.5"/></svg><span class="lb" style="left:-6px;right:-6px;top:14.5px;color:#000;font-size:14.4px;transform:translateX(-1.6px) scaleX(0.875)">sF9</span></div>
<div class="b" style="left:1255.2px;top:60.4px;width:32.5px;height:31.8px"><svg style="left:-1.25px;top:-1.25px" width="32.5" height="31.25" viewBox="0 0 32.5 31.25" fill="none" stroke="#000" stroke-width="1.35"><path d="M4.9 9.3H25.7" stroke-width="1.5"/><path d="M8.4 4.3L21 16.3M21 4.3L8.4 16.3" stroke="#ff2020" stroke-width="1.3"/></svg><span class="lb" style="left:-6px;right:-6px;top:14.5px;color:#000;font-size:14.4px;transform:translateX(-1.6px) scaleX(0.875)">cF9</span></div>
<div class="b" style="left:1287.7px;top:60.4px;width:32.5px;height:31.8px"><svg style="left:-1.25px;top:-1.25px" width="32.5" height="31.25" viewBox="0 0 32.5 31.25" fill="none" stroke="#000" stroke-width="1.35"><path d="M15.2 4.3V16.3" stroke-width="1.5"/><path d="M8.7 4.5L20.7 16.3M20.7 4.5L8.7 16.3" stroke="#ff2020" stroke-width="1.3"/></svg><span class="lb" style="left:-6px;right:-6px;top:14.5px;color:#000;font-size:14.4px;transform:translateX(-1.6px) scaleX(0.768)">cF10</span></div>
<div class="b" style="left:1327.7px;top:60.4px;width:32.5px;height:31.8px"><svg style="left:-1.25px;top:-1.25px" width="32.5" height="31.25" viewBox="0 0 32.5 31.25" fill="none" stroke="#000" stroke-width="1.35"><path d="M4.8 10.6H9.7M9.7 4.3V16.3M14.7 6.3V16.3M19.9 4.3V16.3M19.9 10.6H25.6"/><path d="M12.4 7.3L14.7 4.5L17 7.3" stroke-width="1.3"/><path d="M14.7 4.3v3"/></svg><span class="lb" style="left:-6px;right:-6px;top:14.5px;color:#000;font-size:14.4px;transform:translateX(-1.6px) scaleX(0.875)">sF7</span></div>
<div class="b" style="left:1360.2px;top:60.4px;width:32.5px;height:31.8px"><svg style="left:-1.25px;top:-1.25px" width="32.5" height="31.25" viewBox="0 0 32.5 31.25" fill="none" stroke="#000" stroke-width="1.35"><path d="M4.8 10.6H9.7M9.7 4.3V16.3M14.7 4.3V14.3M19.9 4.3V16.3M19.9 10.6H25.6"/><path d="M12.4 13.3L14.7 16.1L17 13.3" stroke-width="1.3"/><path d="M14.7 16.3v-3"/></svg><span class="lb" style="left:-6px;right:-6px;top:14.5px;color:#000;font-size:14.4px;transform:translateX(-1.6px) scaleX(0.875)">sF8</span></div>
<div class="b" style="left:1392.7px;top:60.4px;width:32.5px;height:31.8px"><svg style="left:-1.25px;top:-1.25px" width="32.5" height="31.25" viewBox="0 0 32.5 31.25" fill="none" stroke="#000" stroke-width="1.35"><path d="M4.6 4.3V10.6H9.7M9.7 4.3V16.3M14.7 6.3V16.3M19.9 4.3V16.3M19.9 10.6H25.6V4.3"/><path d="M12.4 7.3L14.7 4.5L17 7.3" stroke-width="1.3"/><path d="M14.7 4.3v3"/></svg><span class="lb" style="left:-6px;right:-6px;top:14.5px;color:#000;font-size:14.4px;transform:translateX(-1.6px) scaleX(0.875)">aF7</span></div>
<div class="b" style="left:1425.2px;top:60.4px;width:32.5px;height:31.8px"><svg style="left:-1.25px;top:-1.25px" width="32.5" height="31.25" viewBox="0 0 32.5 31.25" fill="none" stroke="#000" stroke-width="1.35"><path d="M4.6 4.3V10.6H9.7M9.7 4.3V16.3M14.7 4.3V14.3M19.9 4.3V16.3M19.9 10.6H25.6V4.3"/><path d="M12.4 13.3L14.7 16.1L17 13.3" stroke-width="1.3"/><path d="M14.7 16.3v-3"/></svg><span class="lb" style="left:-6px;right:-6px;top:14.5px;color:#000;font-size:14.4px;transform:translateX(-1.6px) scaleX(0.875)">aF8</span></div>
<div class="b" style="left:1465.2px;top:60.4px;width:32.5px;height:31.8px"><svg class="em" style="left:-1.25px;top:-1.25px" width="32.5" height="31.25" viewBox="0 0 32.5 31.25" fill="none" stroke="#a0a0a0" stroke-width="1.35"><path d="M14.4 4.4V16.6M11.6 7.6L14.4 4.2L17.2 7.6" stroke-width="1.2"/></svg><span class="lb" style="left:-6px;right:-6px;top:14.5px;color:#a0a0a0;font-size:14.4px;transform:translateX(-1.6px) scaleX(0.875);text-shadow:1.1px 1.1px 0 #fff">aF5</span></div>
<div class="b" style="left:1497.7px;top:60.4px;width:32.5px;height:31.8px"><svg class="em" style="left:-1.25px;top:-1.25px" width="32.5" height="31.25" viewBox="0 0 32.5 31.25" fill="none" stroke="#a0a0a0" stroke-width="1.35"><path d="M14.9 4.1V16.3M12.1 13.1L14.9 16.5L17.7 13.1" stroke-width="1.2"/></svg><span class="lb" style="left:-6px;right:-6px;top:14.5px;color:#a0a0a0;font-size:14.4px;transform:translateX(-1.6px) scaleX(0.768);text-shadow:1.1px 1.1px 0 #fff">caF5</span></div>
<div class="b" style="left:1530.2px;top:60.4px;width:32.5px;height:31.8px"><svg style="left:-1.25px;top:-1.25px" width="32.5" height="31.25" viewBox="0 0 32.5 31.25" fill="none" stroke="#000" stroke-width="1.35"><path d="M4.7 10.3H25.7M10.6 14.6L19.7 6.1"/></svg><span class="lb" style="left:-6px;right:-6px;top:14.5px;color:#000;font-size:14.4px;transform:translateX(-1.6px) scaleX(0.615)">caF10</span></div>
<div class="b" style="left:1562.7px;top:60.4px;width:32.5px;height:31.8px"><svg style="left:-1.25px;top:-1.25px" width="32.5" height="31.25" viewBox="0 0 32.5 31.25" fill="none" stroke="#000" stroke-width="1.35"><path d="M3.7 6.8H27.2M9.6 6.8V14H27.2" stroke-width="1.5"/></svg><span class="lb" style="left:-6px;right:-6px;top:14.5px;color:#000;font-size:14.4px;transform:translateX(-1.6px) scaleX(0.875)">F10</span></div>
<div class="b" style="left:1595.2px;top:60.4px;width:32.5px;height:31.8px"><svg style="left:-1.25px;top:-1.25px" width="32.5" height="31.25" viewBox="0 0 32.5 31.25" fill="none" stroke="#000" stroke-width="1.35"><path d="M4 6.8H27.6M9.9 6.8V14H27.6" stroke-width="1.5"/><path d="M7.9 3.7L20.4 15.9M20.4 3.7L7.9 15.9" stroke="#ff2020" stroke-width="1.3"/></svg><span class="lb" style="left:-6px;right:-6px;top:14.5px;color:#000;font-size:14.4px;transform:translateX(-1.6px) scaleX(0.875)">aF9</span></div>
<div class="l" style="left:1634px;top:56px;width:1px;height:41px;background:#a0a0a0"></div>
<div class="l" style="left:1635px;top:56px;width:1px;height:41px;background:#fff"></div>
<div class="l" style="left:212px;top:98px;width:236px;height:1px;background:#a0a0a0"></div>
<div class="l" style="left:212px;top:99px;width:236px;height:1px;background:#fff"></div>
<div class="l" style="left:212px;top:99px;width:1px;height:36px;background:#a0a0a0"></div>
<div class="l" style="left:213px;top:99px;width:1px;height:36px;background:#fff"></div>
<div class="l" style="left:212px;top:134px;width:236px;height:1px;background:#a0a0a0"></div>
<div class="l" style="left:212px;top:135px;width:236px;height:1px;background:#fff"></div>
<div class="l" style="left:446px;top:99px;width:1px;height:36px;background:#a0a0a0"></div>
<div class="l" style="left:447px;top:99px;width:1px;height:36px;background:#fff"></div>
<div class="b" style="left:221.4px;top:103.5px;width:28.75px;height:26.5px"><svg class="i em" style="left:3.15px;top:2.7px" width="20" height="18.75" viewBox="0 0 16 15"><rect x="2.900" y=".5" width="8.200" height="2.600" fill="none" stroke="#a0a0a0" stroke-width="1"/><path d="M5.300 1.800h1.200M7.800 1.800h1.200" stroke="#a0a0a0"/><path d="M5.600 3.600h2.800v2.600h1.800l-3.200 3.200l-3.200-3.200h1.800z" fill="#a0a0a0"/><rect x="2.500" y="10.500" width="9" height="3.800" fill="#a0a0a0"/></svg></div>
<div class="b" style="left:250.15px;top:103.5px;width:28.75px;height:26.5px"><svg class="i em" style="left:3.15px;top:2.7px" width="20" height="18.75" viewBox="0 0 16 15"><rect x=".5" y="2.300" width="7.500" height="4.600" fill="none" stroke="#a0a0a0" stroke-width="1"/><rect x="2.500" y=".6" width="8.300" height="3.400" fill="#f0f0f0" stroke="#a0a0a0" stroke-width="1"/><path d="M4 2.300h2M7.500 2.300h2" stroke="#a0a0a0" stroke-width=".8"/><path d="M5.400 3.800h5.400v3.400h4.400v5.200h-2.400v1.500H5.400v-1.500H2.200V8.200h3.200z" fill="#a0a0a0"/></svg></div>
<div class="b" style="left:278.9px;top:103.5px;width:28.75px;height:26.5px"><svg class="i em" style="left:3.15px;top:2.7px" width="20" height="18.75" viewBox="0 0 16 15"><rect x="-.4" y="3.800" width="15.500" height="4.300" fill="#a0a0a0"/><path d="M1 1.900h2.200M6 1.900h3.400M7.700 .4v3M11.800 .8l1 1.800l1-1.800" fill="none" stroke="#a0a0a0" stroke-width=".9"/><text x="-.4" y="13.900" font-family="Liberation Sans" font-size="8.300" textLength="15.600" lengthAdjust="spacingAndGlyphs" fill="#a0a0a0">error</text></svg></div>
<div class="b" style="left:315.15px;top:103.5px;width:28.75px;height:26.5px"><svg class="i em" style="left:3.15px;top:2.7px" width="20" height="18.75" viewBox="0 0 16 15"><text x="-.8" y="6.300" font-family="Liberation Sans" font-size="8.600" textLength="8.400" lengthAdjust="spacingAndGlyphs" fill="#a0a0a0">S1</text><text x="-.8" y="14.200" font-family="Liberation Sans" font-size="8.600" textLength="8.400" lengthAdjust="spacingAndGlyphs" fill="#a0a0a0">S9</text><path d="M12 1.900v9" stroke="#a0a0a0" stroke-width="1"/><path d="M9.600 9.600l2.400 3.400l2.400-3.400z" fill="#a0a0a0"/></svg></div>
<div class="b" style="left:343.9px;top:103.5px;width:28.75px;height:26.5px"><svg class="i em" style="left:3.15px;top:2.7px" width="20" height="18.75" viewBox="0 0 16 15"><rect x="1.500" y=".5" width="3.800" height="3.600" fill="none" stroke="#a0a0a0" stroke-width="1"/><rect x="1.500" y="10.200" width="3.800" height="3.600" fill="none" stroke="#a0a0a0" stroke-width="1"/><path d="M3.400 4.100v6.100M.4 7.100h6.200" stroke="#a0a0a0" stroke-width="1"/><rect x="8.600" y="0" width="6.300" height="12" fill="#a0a0a0"/></svg></div>
<div class="b" style="left:380.15px;top:103.5px;width:28.75px;height:26.5px"><svg class="i em" style="left:3.15px;top:2.7px" width="20" height="18.75" viewBox="0 0 16 15"><rect x="1.200" y=".7" width="13.400" height="12.700" fill="#a0a0a0"/><rect x="6.55" y="1.55" width="2.7" height="2.7" fill="#f0f0f0"/><rect x="2.25" y="5.65" width="2.7" height="2.7" fill="#f0f0f0"/><rect x="6.55" y="5.65" width="2.7" height="2.7" fill="#f0f0f0"/><rect x="10.85" y="5.65" width="2.7" height="2.7" fill="#f0f0f0"/><rect x="2.25" y="9.85" width="2.7" height="2.7" fill="#f0f0f0"/><rect x="6.55" y="9.85" width="2.7" height="2.7" fill="#f0f0f0"/></svg></div>
<div class="b" style="left:408.9px;top:103.5px;width:28.75px;height:26.5px"><svg class="i em" style="left:3.15px;top:2.7px" width="20" height="18.75" viewBox="0 0 16 15"><rect x="3.300" y=".5" width="3.800" height="3.600" fill="none" stroke="#a0a0a0" stroke-width="1"/><path d="M5.200 4.100v5.500M1.200 6.700h8.200" stroke="#a0a0a0" stroke-width="1"/><rect x="2.300" y="9.600" width="5.600" height="4.700" fill="#a0a0a0"/><path d="M11.800 4.300v6" stroke="#a0a0a0" stroke-width="1"/><path d="M9.500 9.600l2.300 3.400l2.300-3.400z" fill="#a0a0a0"/></svg></div>
<div class="l" style="left:455px;top:99px;width:1px;height:40px;background:#a0a0a0"></div>
<div class="l" style="left:456px;top:99px;width:1px;height:40px;background:#fff"></div>
<div class="b" style="left:465px;top:103.1px;width:32.5px;height:30.9px"><svg class="em" style="left:-1.25px;top:-1.25px" width="32.5" height="31.25" viewBox="0 0 32.5 31.25" fill="none" stroke="#a0a0a0" stroke-width="1.35"><rect x="5.4" y="3.7" width="20" height="11.4"/></svg><span class="lb" style="left:-6px;right:-6px;top:15.5px;color:#a0a0a0;font-size:12.5px;transform:translateX(-1.8px) scaleX(1.000);text-shadow:1.1px 1.1px 0 #fff">F5</span></div>
<div class="b" style="left:497.5px;top:103.1px;width:32.5px;height:30.9px"><svg class="em" style="left:-1.25px;top:-1.25px" width="32.5" height="31.25" viewBox="0 0 32.5 31.25" fill="none" stroke="#a0a0a0" stroke-width="1.35"><rect x="5.4" y="3.7" width="20.6" height="11.4"/><path d="M5.4 8.4H26"/></svg><span class="lb" style="left:-6px;right:-6px;top:15.5px;color:#a0a0a0;font-size:12.5px;transform:translateX(-1.8px) scaleX(1.000);text-shadow:1.1px 1.1px 0 #fff">F6</span></div>
<div class="b" style="left:530px;top:103.1px;width:32.5px;height:30.9px"><svg class="em" style="left:-1.25px;top:-1.25px" width="32.5" height="31.25" viewBox="0 0 32.5 31.25" fill="none" stroke="#a0a0a0" stroke-width="1.35"><rect x="5.4" y="3.7" width="20.6" height="11.4"/><path d="M5.4 7.5H26M5.4 11.3H26"/></svg><span class="lb" style="left:-6px;right:-6px;top:15.5px;color:#a0a0a0;font-size:12.5px;transform:translateX(-1.8px) scaleX(1.000);text-shadow:1.1px 1.1px 0 #fff">sF6</span></div>
<div class="b" style="left:562.5px;top:103.1px;width:32.5px;height:30.9px"><svg class="em" style="left:-1.25px;top:-1.25px" width="32.5" height="31.25" viewBox="0 0 32.5 31.25" fill="none" stroke="#a0a0a0" stroke-width="1.35"><path d="M10.6 3.7V11.2H19.5M16.5 8.6L19.8 11.2L16.5 13.8"/></svg><span class="lb" style="left:-6px;right:-6px;top:15.5px;color:#a0a0a0;font-size:12.5px;transform:translateX(-1.8px) scaleX(1.000);text-shadow:1.1px 1.1px 0 #fff">F8</span></div>
<div class="b" style="left:595px;top:103.1px;width:32.5px;height:30.9px"><svg class="em" style="left:-1.25px;top:-1.25px" width="32.5" height="31.25" viewBox="0 0 32.5 31.25" fill="none" stroke="#a0a0a0" stroke-width="1.35"><path d="M15.7 3.7V11.2M7.4 11.2H23.8M7.4 14.2H23.8"/></svg><span class="lb" style="left:-6px;right:-6px;top:15.5px;color:#a0a0a0;font-size:12.5px;transform:translateX(-1.8px) scaleX(1.000);text-shadow:1.1px 1.1px 0 #fff">F7</span></div>
<div class="b" style="left:627.5px;top:103.1px;width:32.5px;height:30.9px"><svg class="em" style="left:-1.25px;top:-1.25px" width="32.5" height="31.25" viewBox="0 0 32.5 31.25" fill="none" stroke="#a0a0a0" stroke-width="1.35"><rect x="6" y="4.2" width="19.6" height="10.6" stroke-width="2"/><path d="M6 4.2L25.6 14.8M25.6 4.2L6 14.8" stroke-width="1.1"/></svg><span class="lb" style="left:-6px;right:-6px;top:15.5px;color:#a0a0a0;font-size:12.5px;transform:translateX(-1.8px) scaleX(1.000);text-shadow:1.1px 1.1px 0 #fff">sF5</span></div>
<div class="b" style="left:660px;top:103.1px;width:32.5px;height:30.9px"><svg class="em" style="left:-1.25px;top:-1.25px" width="32.5" height="31.25" viewBox="0 0 32.5 31.25" fill="none" stroke="#a0a0a0" stroke-width="1.35"><path d="M15.2 3.7V14.5M7 8.6H23.8"/></svg><span class="lb" style="left:-6px;right:-6px;top:15.5px;color:#a0a0a0;font-size:12.5px;transform:translateX(-1.8px) scaleX(1.000);text-shadow:1.1px 1.1px 0 #fff">F5</span></div>
<div class="b" style="left:692.5px;top:103.1px;width:32.5px;height:30.9px"><svg class="em" style="left:-1.25px;top:-1.25px" width="32.5" height="31.25" viewBox="0 0 32.5 31.25" fill="none" stroke="#a0a0a0" stroke-width="1.35"><path d="M4.8 6.6H19.4V14.5"/></svg><span class="lb" style="left:-6px;right:-6px;top:15.5px;color:#a0a0a0;font-size:12.5px;transform:translateX(-1.8px) scaleX(1.000);text-shadow:1.1px 1.1px 0 #fff">F6</span></div>
<div class="b" style="left:725px;top:103.1px;width:32.5px;height:30.9px"><svg class="em" style="left:-1.25px;top:-1.25px" width="32.5" height="31.25" viewBox="0 0 32.5 31.25" fill="none" stroke="#a0a0a0" stroke-width="1.35"><path d="M4.9 6.6H19.7V14.5M4.9 9H19.7"/></svg><span class="lb" style="left:-6px;right:-6px;top:15.5px;color:#a0a0a0;font-size:12.5px;transform:translateX(-1.8px) scaleX(1.000);text-shadow:1.1px 1.1px 0 #fff">F7</span></div>
<div class="b" style="left:757.5px;top:103.1px;width:32.5px;height:30.9px"><svg class="em" style="left:-1.25px;top:-1.25px" width="32.5" height="31.25" viewBox="0 0 32.5 31.25" fill="none" stroke="#a0a0a0" stroke-width="1.35"><path d="M20 6V13.8H4.9"/></svg><span class="lb" style="left:-6px;right:-6px;top:15.5px;color:#a0a0a0;font-size:12.5px;transform:translateX(-1.8px) scaleX(1.000);text-shadow:1.1px 1.1px 0 #fff">F8</span></div>
<div class="b" style="left:790px;top:103.1px;width:32.5px;height:30.9px"><svg class="em" style="left:-1.25px;top:-1.25px" width="32.5" height="31.25" viewBox="0 0 32.5 31.25" fill="none" stroke="#a0a0a0" stroke-width="1.35"><path d="M19.7 6V14.4M5 11.2H19.7M5 13.8H19.7"/></svg><span class="lb" style="left:-6px;right:-6px;top:15.5px;color:#a0a0a0;font-size:12.5px;transform:translateX(-1.8px) scaleX(1.000);text-shadow:1.1px 1.1px 0 #fff">F9</span></div>
<div class="b" style="left:822.5px;top:103.1px;width:32.5px;height:30.9px"><svg class="em" style="left:-1.25px;top:-1.25px" width="32.5" height="31.25" viewBox="0 0 32.5 31.25" fill="none" stroke="#a0a0a0" stroke-width="1.35"><path d="M15.4 4.6V14.5"/></svg><span class="lb" style="left:-6px;right:-6px;top:15.5px;color:#a0a0a0;font-size:12.5px;transform:translateX(-1.8px) scaleX(1.000);text-shadow:1.1px 1.1px 0 #fff">sF9</span></div>
<div class="b" style="left:862.5px;top:103.1px;width:32.5px;height:30.9px"><svg class="em" style="left:-1.25px;top:-1.25px" width="32.5" height="31.25" viewBox="0 0 32.5 31.25" fill="none" stroke="#a0a0a0" stroke-width="1.35"><rect x="6" y="4.5" width="19.2" height="10" stroke-width="1.7" stroke-dasharray="3.2 1.6"/></svg><span class="lb" style="left:-6px;right:-6px;top:15.5px;color:#a0a0a0;font-size:12.5px;transform:translateX(-1.8px) scaleX(1.000);text-shadow:1.1px 1.1px 0 #fff">c1</span></div>
<div class="b" style="left:895px;top:103.1px;width:32.5px;height:30.9px"><svg class="em" style="left:-1.25px;top:-1.25px" width="32.5" height="31.25" viewBox="0 0 32.5 31.25" fill="none" stroke="#a0a0a0" stroke-width="1.35"><rect x="6" y="4.5" width="19.2" height="10" stroke-width="1.7" stroke-dasharray="3.2 1.6"/><text x="15.6" y="13.6" font-family="Liberation Sans" font-size="10.8" text-anchor="middle" fill="#a0a0a0" stroke="none">SC</text></svg><span class="lb" style="left:-6px;right:-6px;top:15.5px;color:#a0a0a0;font-size:12.5px;transform:translateX(-1.8px) scaleX(1.000);text-shadow:1.1px 1.1px 0 #fff">c2</span></div>
<div class="b" style="left:927.5px;top:103.1px;width:32.5px;height:30.9px"><svg class="em" style="left:-1.25px;top:-1.25px" width="32.5" height="31.25" viewBox="0 0 32.5 31.25" fill="none" stroke="#a0a0a0" stroke-width="1.35"><rect x="6" y="4.5" width="19.2" height="10" stroke-width="1.7" stroke-dasharray="3.2 1.6"/><text x="15.6" y="13.6" font-family="Liberation Sans" font-size="10.8" text-anchor="middle" fill="#a0a0a0" stroke="none">SE</text></svg><span class="lb" style="left:-6px;right:-6px;top:15.5px;color:#a0a0a0;font-size:12.5px;transform:translateX(-1.8px) scaleX(1.000);text-shadow:1.1px 1.1px 0 #fff">c3</span></div>
<div class="b" style="left:960px;top:103.1px;width:32.5px;height:30.9px"><svg class="em" style="left:-1.25px;top:-1.25px" width="32.5" height="31.25" viewBox="0 0 32.5 31.25" fill="none" stroke="#a0a0a0" stroke-width="1.35"><rect x="6" y="4.5" width="19.2" height="10" stroke-width="1.7" stroke-dasharray="3.2 1.6"/><text x="15.6" y="13.6" font-family="Liberation Sans" font-size="10.8" text-anchor="middle" fill="#a0a0a0" stroke="none">ST</text></svg><span class="lb" style="left:-6px;right:-6px;top:15.5px;color:#a0a0a0;font-size:12.5px;transform:translateX(-1.8px) scaleX(1.000);text-shadow:1.1px 1.1px 0 #fff">c4</span></div>
<div class="b" style="left:992.5px;top:103.1px;width:32.5px;height:30.9px"><svg class="em" style="left:-1.25px;top:-1.25px" width="32.5" height="31.25" viewBox="0 0 32.5 31.25" fill="none" stroke="#a0a0a0" stroke-width="1.35"><rect x="6" y="4.5" width="19.2" height="10" stroke-width="1.7" stroke-dasharray="3.2 1.6"/><text x="15.6" y="13.6" font-family="Liberation Sans" font-size="10.8" text-anchor="middle" fill="#a0a0a0" stroke="none">R</text></svg><span class="lb" style="left:-6px;right:-6px;top:15.5px;color:#a0a0a0;font-size:12.5px;transform:translateX(-1.8px) scaleX(1.000);text-shadow:1.1px 1.1px 0 #fff">c5</span></div>
<div class="b" style="left:1025px;top:103.1px;width:32.5px;height:30.9px"><svg class="em" style="left:-1.25px;top:-1.25px" width="32.5" height="31.25" viewBox="0 0 32.5 31.25" fill="none" stroke="#a0a0a0" stroke-width="1.35"><path d="M16 4.8V13.9"/></svg><span class="lb" style="left:-6px;right:-6px;top:15.5px;color:#a0a0a0;font-size:12.5px;transform:translateX(-1.8px) scaleX(1.000);text-shadow:1.1px 1.1px 0 #fff">aF5</span></div>
<div class="b" style="left:1057.5px;top:103.1px;width:32.5px;height:30.9px"><svg class="em" style="left:-1.25px;top:-1.25px" width="32.5" height="31.25" viewBox="0 0 32.5 31.25" fill="none" stroke="#a0a0a0" stroke-width="1.35"><path d="M4.9 6.3H20V14.2"/></svg><span class="lb" style="left:-6px;right:-6px;top:15.5px;color:#a0a0a0;font-size:12.5px;transform:translateX(-1.8px) scaleX(1.000);text-shadow:1.1px 1.1px 0 #fff">aF7</span></div>
<div class="b" style="left:1090px;top:103.1px;width:32.5px;height:30.9px"><svg class="em" style="left:-1.25px;top:-1.25px" width="32.5" height="31.25" viewBox="0 0 32.5 31.25" fill="none" stroke="#a0a0a0" stroke-width="1.35"><path d="M5.2 6.3H19.4V14.2M5.2 8.8H19.4"/></svg><span class="lb" style="left:-6px;right:-6px;top:15.5px;color:#a0a0a0;font-size:12.5px;transform:translateX(-1.8px) scaleX(1.000);text-shadow:1.1px 1.1px 0 #fff">aF8</span></div>
<div class="b" style="left:1122.5px;top:103.1px;width:32.5px;height:30.9px"><svg class="em" style="left:-1.25px;top:-1.25px" width="32.5" height="31.25" viewBox="0 0 32.5 31.25" fill="none" stroke="#a0a0a0" stroke-width="1.35"><path d="M20.1 6.3V13.9H5"/></svg><span class="lb" style="left:-6px;right:-6px;top:15.5px;color:#a0a0a0;font-size:12.5px;transform:translateX(-1.8px) scaleX(1.000);text-shadow:1.1px 1.1px 0 #fff">aF9</span></div>
<div class="b" style="left:1155px;top:103.1px;width:32.5px;height:30.9px"><svg class="em" style="left:-1.25px;top:-1.25px" width="32.5" height="31.25" viewBox="0 0 32.5 31.25" fill="none" stroke="#a0a0a0" stroke-width="1.35"><path d="M21 6.3V14.5M5.5 11.4H21M5.5 13.9H21"/></svg><span class="lb" style="left:-6px;right:-6px;top:15.5px;color:#a0a0a0;font-size:12.5px;transform:translateX(-1.8px) scaleX(0.864);text-shadow:1.1px 1.1px 0 #fff">aF10</span></div>
<div class="b" style="left:1187.5px;top:103.1px;width:32.5px;height:30.9px"><svg class="em" style="left:-1.25px;top:-1.25px" width="32.5" height="31.25" viewBox="0 0 32.5 31.25" fill="none" stroke="#a0a0a0" stroke-width="1.35"><path d="M11.2 4.8L21.5 14.8M21.5 4.8L11.2 14.8M16.3 4.8V14.8" stroke-width="1.1"/></svg><span class="lb" style="left:-6px;right:-6px;top:15.5px;color:#a0a0a0;font-size:12.5px;transform:translateX(-1.8px) scaleX(1.000);text-shadow:1.1px 1.1px 0 #fff">cF9</span></div>
<div class="l" style="left:1228px;top:99px;width:1px;height:40px;background:#a0a0a0"></div>
<div class="l" style="left:1229px;top:99px;width:1px;height:40px;background:#fff"></div>
<div class="l" style="left:0px;top:139px;width:1235px;height:1px;background:#a0a0a0"></div>
<div class="l" style="left:0px;top:140px;width:1235px;height:1px;background:#fff"></div>
<div class="" style="left:7.7px;top:146.6px;width:147.8px;height:23.2px;background:#fff;border-right:1.25px solid #fff;border-bottom:1.25px solid #fff"></div>
<div class="" style="left:7.7px;top:146.6px;width:146.6px;height:2.6px;background:linear-gradient(180deg,#a8a8a8 0,#a0a0a0 45%,#606060 55%,#606060 100%)"></div>
<div class="" style="left:7.7px;top:146.6px;width:2.6px;height:22px;background:linear-gradient(90deg,#a8a8a8 0,#a0a0a0 45%,#606060 55%,#606060 100%)"></div>
<div class="l" style="left:10.3px;top:167.3px;width:144px;height:1.25px;background:#dcdcdc"></div>
<div class="l" style="left:153px;top:149.2px;width:1.25px;height:19.4px;background:#dcdcdc"></div>
<div class="b" style="left:133.3px;top:149.2px;width:20px;height:18.8px;border-right:1.4px solid #5a5a5a;border-bottom:1.4px solid #5a5a5a;box-shadow:inset -1.25px -1.25px 0 #a0a0a0"><svg style="left:4.6px;top:6.2px" width="9" height="5" viewBox="0 0 9 5"><path d="M0 0h9l-4.5 5z" fill="#000"/></svg></div>
<span class="t ui" style="left:12px;top:151px;font-size:14.6px">程序</span>
<div class="" style="left:165px;top:146.6px;width:147.8px;height:23.2px;background:#fff;border-right:1.25px solid #fff;border-bottom:1.25px solid #fff"></div>
<div class="" style="left:165px;top:146.6px;width:146.6px;height:2.6px;background:linear-gradient(180deg,#a8a8a8 0,#a0a0a0 45%,#606060 55%,#606060 100%)"></div>
<div class="" style="left:165px;top:146.6px;width:2.6px;height:22px;background:linear-gradient(90deg,#a8a8a8 0,#a0a0a0 45%,#606060 55%,#606060 100%)"></div>
<div class="l" style="left:167.6px;top:167.3px;width:144px;height:1.25px;background:#dcdcdc"></div>
<div class="l" style="left:310.3px;top:149.2px;width:1.25px;height:19.4px;background:#dcdcdc"></div>
<div class="b" style="left:290.6px;top:149.2px;width:20px;height:18.8px;border-right:1.4px solid #5a5a5a;border-bottom:1.4px solid #5a5a5a;box-shadow:inset -1.25px -1.25px 0 #a0a0a0"><svg style="left:4.6px;top:6.2px" width="9" height="5" viewBox="0 0 9 5"><path d="M0 0h9l-4.5 5z" fill="#000"/></svg></div>
<div class="b" style="left:337.8px;top:145.6px;width:28.75px;height:27px"><svg class="i" style="left:3.15px;top:2.7px" width="20" height="18.75" viewBox="0 0 16 15"><path d="M1.300 2.800h7.500l3 3v8.400H1.300z" fill="#fff" stroke="#000" stroke-width="1.300"/><circle cx="10.600" cy="3.800" r="3.500" fill="none" stroke="#0000ff" stroke-width="1.100"/><path d="M12.800 6.600l3 4" stroke="#0000ff" stroke-width="1.400"/><path d="M8.800 2.800l2.500 2.700" stroke="#000" stroke-width="1"/></svg></div>
<div class="b p" style="left:366.55px;top:145.6px;width:28.75px;height:27px"><svg class="i" style="left:3.15px;top:2.7px" width="20" height="18.75" viewBox="0 0 16 15"><path d="M1.700 -.6v15" stroke="#0000ff" stroke-width="1" stroke-dasharray="1.200 1"/><rect x="-.5" y="2.400" width="4.400" height="2.900" rx="1" fill="#c8c8c8" stroke="#000080" stroke-width="1"/><path d="M3.900 3.800h2.200" stroke="#000080"/><rect x="6" y="2.600" width="5.300" height="2.700" fill="#ff00ff"/><path d="M8.400 5.300v6.800h2.500M8.400 8.200h2.500" fill="none" stroke="#0000ff" stroke-width="1.200"/><rect x="10.800" y="6.900" width="4.300" height="2.600" fill="#0000ff"/><rect x="10.800" y="10.800" width="4.300" height="2.600" fill="#0000ff"/></svg></div>
<div class="l" style="left:402px;top:144px;width:1px;height:30px;background:#a0a0a0"></div>
<div class="l" style="left:403px;top:144px;width:1px;height:30px;background:#fff"></div>
<div class="b" style="left:412.6px;top:145.6px;width:28.75px;height:27px"><svg class="i em" style="left:3.15px;top:2.7px" width="20" height="18.75" viewBox="0 0 16 15"><rect x="3.300" y="2" width="3.200" height="2.800" fill="#a0a0a0"/><rect x="8.300" y="2" width="3.200" height="2.800" fill="#a0a0a0"/><path d="M4.900 4.800l2.500 3l2.500-3M7.400 7.800v2" fill="none" stroke="#a0a0a0" stroke-width="1"/><path d="M6.200 9.500h1.800l1 1.500v2.200H6.200z" fill="none" stroke="#a0a0a0" stroke-width="1"/></svg></div>
<div class="b" style="left:441.35px;top:145.6px;width:28.75px;height:27px"><svg class="i em" style="left:3.15px;top:2.7px" width="20" height="18.75" viewBox="0 0 16 15"><rect x=".8" y=".8" width="6.200" height="7.500" rx="1" fill="none" stroke="#a0a0a0" stroke-width="1"/><path d="M2.200 3h3.500M2.200 4.800h3.500M2.200 6.500h3.500" stroke="#a0a0a0" stroke-width=".9"/><path d="M9.500 .8h3.500v5.500h1.500v7H4.500v-2h-3.500v-2h5l3.500-3z" fill="#a0a0a0"/><rect x="10.45" y="2.45" width="1.1" height="1.1" fill="#f0f0f0"/><rect x="9.45" y="5.45" width="1.1" height="1.1" fill="#f0f0f0"/><rect x="7.95" y="9.95" width="1.1" height="1.1" fill="#f0f0f0"/><rect x="10.95" y="8.95" width="1.1" height="1.1" fill="#f0f0f0"/></svg></div>
<div class="l" style="left:478px;top:144px;width:1px;height:30px;background:#a0a0a0"></div>
<div class="l" style="left:479px;top:144px;width:1px;height:30px;background:#fff"></div>
<div class="b" style="left:487.5px;top:145.6px;width:28.75px;height:27px"><svg class="i em" style="left:3.15px;top:2.7px" width="20" height="18.75" viewBox="0 0 16 15"><rect x=".6" y=".8" width="3" height="3" fill="none" stroke="#a0a0a0" stroke-width="1"/><path d="M3.600 2.300h3.400M5.800 1l1.400 1.300l-1.400 1.300M3.200 3.800v8.200h3.800M5.800 10.700l1.400 1.300l-1.400 1.300" fill="none" stroke="#a0a0a0" stroke-width=".9"/><rect x="8.500" y=".6" width="4.800" height="12.400" fill="none" stroke="#a0a0a0" stroke-width="1"/><path d="M9.800 2.800h2.200M9.800 4.800h2.200M9.800 6.800h2.200M9.800 8.800h2.200M9.800 10.800h2.200" stroke="#a0a0a0" stroke-width=".9"/></svg></div>
<div class="l" style="left:524px;top:144px;width:1px;height:30px;background:#a0a0a0"></div>
<div class="l" style="left:525px;top:144px;width:1px;height:30px;background:#fff"></div>
<div class="l" style="left:543px;top:144px;width:1px;height:30px;background:#a0a0a0"></div>
<div class="l" style="left:544px;top:144px;width:1px;height:30px;background:#fff"></div>
<div class="b" style="left:553.8px;top:145.6px;width:28.75px;height:27px"><svg class="i" style="left:3.15px;top:2.7px" width="20" height="18.75" viewBox="0 0 16 15"><rect x=".5" y=".5" width="7" height="5.200" fill="#fff" stroke="#0000ff" stroke-width="1.200"/><path d="M1.800 3.100h1.500M4.700 3.100h1.600M3.300 1.800v2.600M4.700 1.800v2.600" stroke="#ff0000" stroke-width="1"/><path d="M8.800 1.600q3.200 .6 3.400 4.400M2.600 7.200q.2 4 3.600 4.800" fill="none" stroke="#800080" stroke-width="1.100"/><path d="M11 5l1.300 2l1.200-2.200zM4.800 10.800l2.200 1.300l-2 1.200z" fill="#800080"/><rect x="6.400" y="7.600" width="8.400" height="5.400" fill="#0000ff"/><text x="10.6" y="12.3" font-family="Liberation Sans" font-size="5.6" font-weight="bold" text-anchor="middle" fill="#ffff00" stroke="none">LD</text></svg></div>
<div class="b" style="left:590.05px;top:145.6px;width:28.75px;height:27px"><svg class="i" style="left:3.15px;top:2.7px" width="20" height="18.75" viewBox="0 0 16 15"><g fill="none" stroke="#0000ff" stroke-width="1"><path d="M.3 2.400h2.200M3.800 2.400h6M2.500 .9v3M3.800 .9v3M.3 6.500h2.200M3.800 6.500h6M2.500 5v3M3.800 5v3M6.200 6.500v4.600h3.600"/><path d="M10.800 1.200q-1.300 1.200 0 2.400M12.300 1.200q1.300 1.200 0 2.400M13.200 2.400h1.800M10.800 5.300q-1.300 1.200 0 2.400M12.300 5.300q1.300 1.200 0 2.400M13.200 6.500h1.800M10.800 9.900q-1.300 1.200 0 2.400M12.300 9.900q1.300 1.200 0 2.400M13.200 11.100h1.800"/></g></svg></div>
<div class="b p" style="left:618.8px;top:145.6px;width:28.75px;height:27px"><svg class="i" style="left:3.15px;top:2.7px" width="20" height="18.75" viewBox="0 0 16 15"><g transform="translate(1.600 2) scale(.92)"><g fill="none" stroke="#0000ff" stroke-width="1"><path d="M.3 2.400h2.200M3.800 2.400h6M2.500 .9v3M3.800 .9v3M.3 6.500h2.200M3.800 6.500h6M2.500 5v3M3.800 5v3M6.200 6.500v4.600h3.600"/><path d="M10.800 1.200q-1.300 1.200 0 2.400M12.300 1.200q1.300 1.200 0 2.400M13.200 2.400h1.800M10.800 5.300q-1.300 1.200 0 2.400M12.300 5.300q1.300 1.200 0 2.400M13.200 6.500h1.800M10.800 9.900q-1.300 1.200 0 2.400M12.300 9.900q1.300 1.200 0 2.400M13.200 11.100h1.800"/></g></g><path d="M12.74 -0.53L7.63 4.29L9.76 6.54L14.86 1.73z" fill="#ff0000"/><path d="M7.63 4.29L6.90 4.97L9.03 7.23L9.76 6.54z" fill="#ffff00"/><path d="M6.90 4.97L6.80 7.20L9.03 7.23z" fill="#000"/></svg></div>
<div class="b" style="left:647.55px;top:145.6px;width:28.75px;height:27px"><svg class="i" style="left:3.15px;top:2.7px" width="20" height="18.75" viewBox="0 0 16 15"><circle cx="9.200" cy="5" r="4.800" fill="none" stroke="#0000ff" stroke-width="1"/><path d="M12.500 8.600l3.400 3.600" stroke="#0000ff" stroke-width="1.100"/><rect x="6.200" y="2.200" width="5" height="6" fill="#c8c8c8" stroke="#808080" stroke-width=".8"/><path d="M7 3.800h3.400M7 5.200h3.400M7 6.600h3.400" stroke="#606060" stroke-width=".7"/><rect x="0.3" y="9.2" width="7.2" height="3.8" fill="#fff" stroke="#000" stroke-width=".9"/><rect x="0.7" y="9.6" width="2" height="3" fill="#400000"/><rect x="2.7" y="9.6" width="2.200" height="3" fill="#ff00ff"/></svg></div>
<div class="b" style="left:676.3px;top:145.6px;width:28.75px;height:27px"><svg class="i" style="left:3.15px;top:2.7px" width="20" height="18.75" viewBox="0 0 16 15"><circle cx="8.200" cy="5.200" r="4.800" fill="none" stroke="#0000ff" stroke-width="1"/><path d="M11.500 8.800l3.400 3.600" stroke="#0000ff" stroke-width="1.100"/><path d="M13.34 -0.73L8.43 3.89L10.56 6.15L15.46 1.53z" fill="#ff0000"/><path d="M8.43 3.89L7.70 4.57L9.83 6.83L10.56 6.15z" fill="#ffff00"/><path d="M7.70 4.57L7.60 6.80L9.83 6.83z" fill="#000"/><rect x="0.3" y="9.2" width="7.2" height="3.8" fill="#fff" stroke="#000" stroke-width=".9"/><rect x="0.7" y="9.6" width="2" height="3" fill="#400000"/><rect x="2.7" y="9.6" width="2.200" height="3" fill="#ff00ff"/></svg></div>
<div class="b" style="left:712.55px;top:145.6px;width:28.75px;height:27px"><svg class="i em" style="left:3.15px;top:2.7px" width="20" height="18.75" viewBox="0 0 16 15"><path d="M1.500 3.800q0-3 3-3h6.500q3 0 3 3t-3 2.500H9.500v7.700H4V6.300q-2.500 0-2.500-2.500z" fill="#a0a0a0"/><rect x="3.95" y="2.45" width="1.1" height="1.1" fill="#f0f0f0"/><rect x="6.45" y="2.45" width="1.1" height="1.1" fill="#f0f0f0"/><rect x="8.95" y="2.45" width="1.1" height="1.1" fill="#f0f0f0"/><rect x="5.45" y="8.45" width="1.1" height="1.1" fill="#f0f0f0"/><rect x="7.45" y="10.45" width="1.1" height="1.1" fill="#f0f0f0"/></svg></div>
<div class="b" style="left:741.3px;top:145.6px;width:28.75px;height:27px"><svg class="i em" style="left:3.15px;top:2.7px" width="20" height="18.75" viewBox="0 0 16 15"><path d="M1.500 1l12 12.500M13.500 1L1.500 13.500" stroke="#a0a0a0" stroke-width="1.100"/><path d="M3 2.500h9v3.500l-2 1.500l2.500 6h-10l2.500-6l-2-1.500z" fill="#a0a0a0"/><rect x="5.45" y="3.45" width="1.1" height="1.1" fill="#f0f0f0"/><rect x="8.45" y="3.45" width="1.1" height="1.1" fill="#f0f0f0"/><rect x="6.95" y="9.45" width="1.1" height="1.1" fill="#f0f0f0"/></svg></div>
<div class="b" style="left:777.55px;top:145.6px;width:28.75px;height:27px"><svg class="i" style="left:3.15px;top:2.7px" width="20" height="18.75" viewBox="0 0 16 15"><path d="M-.4 2.300h2.800M2.400 .4v3.800M4.600 .4v3.800M4.600 2.300h10.700" stroke="#000" stroke-width="1.200" fill="none"/><path d="M0.6 8.2l2.6 2.6m0 -2.6l-2.6 2.6" stroke="#000" stroke-width="1.0" fill="none"/><path d="M4.3 8.2l2.6 2.6m0 -2.6l-2.6 2.6" stroke="#000" stroke-width="1.0" fill="none"/><path d="M8 8.2l2.6 2.6m0 -2.6l-2.6 2.6" stroke="#000" stroke-width="1.0" fill="none"/><path d="M11.7 8.2l2.6 2.6m0 -2.6l-2.6 2.6" stroke="#000" stroke-width="1.0" fill="none"/><path d="M0.6 12l2.6 2.6m0 -2.6l-2.6 2.6" stroke="#000" stroke-width="1.0" fill="none"/><path d="M4.3 12l2.6 2.6m0 -2.6l-2.6 2.6" stroke="#000" stroke-width="1.0" fill="none"/><path d="M8 12l2.6 2.6m0 -2.6l-2.6 2.6" stroke="#000" stroke-width="1.0" fill="none"/><path d="M11.7 12l2.6 2.6m0 -2.6l-2.6 2.6" stroke="#000" stroke-width="1.0" fill="none"/><path d="M11.95 0.26L5.45 6.29L7.56 8.57L14.05 2.54z" fill="#ff0000"/><path d="M5.45 6.29L4.72 6.98L6.83 9.25L7.56 8.57z" fill="#ffff00"/><path d="M4.72 6.98L4.60 9.20L6.83 9.25z" fill="#000"/></svg></div>
<div class="b" style="left:806.3px;top:145.6px;width:28.75px;height:27px"><svg class="i" style="left:3.15px;top:2.7px" width="20" height="18.75" viewBox="0 0 16 15"><path d="M0 1.800v13M.2 12.100h.6M.5 10.200v3.800M3.400 10.200v3.800M3.400 12.100h11.900" stroke="#000" stroke-width="1.200" fill="none"/><path d="M1.8 2.5l2.4 2.4m0 -2.4l-2.4 2.4" stroke="#000" stroke-width="1.0" fill="none"/><path d="M5.4 2.5l2.4 2.4m0 -2.4l-2.4 2.4" stroke="#000" stroke-width="1.0" fill="none"/><path d="M9 2.5l2.4 2.4m0 -2.4l-2.4 2.4" stroke="#000" stroke-width="1.0" fill="none"/><path d="M12.6 2.5l2.4 2.4m0 -2.4l-2.4 2.4" stroke="#000" stroke-width="1.0" fill="none"/><path d="M1.8 5.6l2.4 2.4m0 -2.4l-2.4 2.4" stroke="#000" stroke-width="1.0" fill="none"/><path d="M5.4 5.6l2.4 2.4m0 -2.4l-2.4 2.4" stroke="#000" stroke-width="1.0" fill="none"/><path d="M9 5.6l2.4 2.4m0 -2.4l-2.4 2.4" stroke="#000" stroke-width="1.0" fill="none"/><path d="M12.6 5.6l2.4 2.4m0 -2.4l-2.4 2.4" stroke="#000" stroke-width="1.0" fill="none"/><path d="M12.200 5.300l2.600 1.500l-2.600 1.500" fill="none" stroke="#000" stroke-width="1"/><path d="M12.54 -0.83L6.64 4.69L8.76 6.96L14.66 1.43z" fill="#ff0000"/><path d="M6.64 4.69L5.91 5.38L8.03 7.64L8.76 6.96z" fill="#ffff00"/><path d="M5.91 5.38L5.80 7.60L8.03 7.64z" fill="#000"/></svg></div>
<div class="b" style="left:835.05px;top:145.6px;width:28.75px;height:27px"><svg class="i" style="left:3.15px;top:2.7px" width="20" height="18.75" viewBox="0 0 16 15"><path d="M0.5 5.4l2.4 2.4m0 -2.4l-2.4 2.4" stroke="#000" stroke-width="1.0" fill="none"/><path d="M3.9 5.4l2.4 2.4m0 -2.4l-2.4 2.4" stroke="#000" stroke-width="1.0" fill="none"/><path d="M9.4 5.4l2.4 2.4m0 -2.4l-2.4 2.4" stroke="#000" stroke-width="1.0" fill="none"/><path d="M12.8 5.4l2.4 2.4m0 -2.4l-2.4 2.4" stroke="#000" stroke-width="1.0" fill="none"/><path d="M.4 12.100h2.800M7.400 10l-3.200 2.100l3.200 2.100M9.400 10l3.200 2.100l-3.200 2.100M14.600 9.800v4.600" fill="none" stroke="#000" stroke-width="1.200"/><path d="M13.26 -1.03L6.13 4.39L8.01 6.86L15.14 1.43z" fill="#ff0000"/><path d="M6.13 4.39L5.33 5.00L7.21 7.46L8.01 6.86z" fill="#ffff00"/><path d="M5.33 5.00L5.00 7.20L7.21 7.46z" fill="#000"/></svg></div>
<div class="b" style="left:871.3px;top:145.6px;width:28.75px;height:27px"><svg class="i" style="left:3.15px;top:2.7px" width="20" height="18.75" viewBox="0 0 16 15"><rect x=".5" y=".6" width="5.500" height="5" fill="none" stroke="#800080" stroke-width="1.100"/><rect x=".5" y="7.600" width="5.500" height="5.400" fill="none" stroke="#800080" stroke-width="1.100"/><rect x="8.800" y=".4" width="5.400" height="12.600" fill="none" stroke="#0000ff" stroke-width="1.100"/><path d="M1 3.1h1.500M2.5 1.5v3.200M4 1.5v3.200M4 3.1h1.500" stroke="#000" stroke-width="1" fill="none"/><path d="M9.3 3.4h1.500M10.8 1.8v3.200M12.3 1.8v3.200M12.3 3.4h1.500" stroke="#000" stroke-width="1" fill="none"/><path d="M1 10.300h4.500M3.300 8.600v3.400M9.300 10h4.500M11.500 8.300v3.400" stroke="#000" stroke-width="1.100"/><path d="M6.300 4.800l2.500 2l-2.500 2z" fill="#ff0000"/></svg></div>
<div class="b" style="left:900.05px;top:145.6px;width:28.75px;height:27px"><svg class="i" style="left:3.15px;top:2.7px" width="20" height="18.75" viewBox="0 0 16 15"><circle cx="7.3" cy="6.8" r="6.5" fill="#fff" stroke="#0000ff" stroke-width="1.1"/><path d="M12.2 11.5l2.9 2.4" stroke="#000080" stroke-width="1.9"/><path d="M3 4.2h1.500M4.5 2.6v3.200M6 2.6v3.200M6 4.2h1.500" stroke="#000" stroke-width="1" fill="none"/><path d="M3.200 8.800h1.200M5.400 8.800h1M8 7.300l-1.800 1.500l1.800 1.500M9.200 7.300l1.800 1.500l-1.800 1.500" fill="none" stroke="#000" stroke-width=".9"/></svg></div>
<div class="b" style="left:936.3px;top:145.6px;width:28.75px;height:27px"><svg class="i em" style="left:3.15px;top:2.7px" width="20" height="18.75" viewBox="0 0 16 15"><path d="M5 .8h8.500v3.800h-2.200v3H9v3.200H6.600v2.400H1.500V9.400h2.200v-3H6v-3h-1z" fill="#a0a0a0"/></svg></div>
<div class="b" style="left:965.05px;top:145.6px;width:28.75px;height:27px"><svg class="i em" style="left:3.15px;top:2.7px" width="20" height="18.75" viewBox="0 0 16 15"><rect x="3.600" y=".8" width="7.800" height="3" fill="#a0a0a0"/><path d="M6.200 4.800h2.600v2h1.700l-3 2.600l-3-2.600h1.700z" fill="#a0a0a0"/><rect x="3.600" y="10.200" width="7.800" height="3" fill="#a0a0a0"/></svg></div>
<div class="b" style="left:1001.3px;top:145.6px;width:28.75px;height:27px"><svg class="i" style="left:3.15px;top:2.7px" width="20" height="18.75" viewBox="0 0 16 15"><rect x="4.700" y=".6" width="10.700" height="9.800" fill="none" stroke="#0000ff" stroke-width="1.300"/><rect x=".7" y="8.300" width="6.100" height="5.900" fill="#f0f0f0" stroke="#0000ff" stroke-width="1.300"/><path d="M7.400 7.600l3.600-3.600" stroke="#0000ff" stroke-width="1.300"/><path d="M8.600 3.200h3.300v3.300z" fill="#000080"/></svg></div>
<div class="b" style="left:1030.05px;top:145.6px;width:28.75px;height:27px"><svg class="i" style="left:3.15px;top:2.7px" width="20" height="18.75" viewBox="0 0 16 15"><rect x=".7" y="3.500" width="11" height="10.700" fill="none" stroke="#0000ff" stroke-width="1.300"/><rect x="9.400" y=".6" width="6" height="5.800" fill="#f0f0f0" stroke="#0000ff" stroke-width="1.300"/><path d="M4.200 11l3.800-3.800" stroke="#0000ff" stroke-width="1.300"/><path d="M5.600 6.400h3.300v3.300z" fill="#000080"/></svg></div>
<div class="b" style="left:1066.3px;top:145.6px;width:28.75px;height:27px"><svg class="i" style="left:3.15px;top:2.7px" width="20" height="18.75" viewBox="0 0 16 15"><circle cx="7.6" cy="7.1" r="6.5" fill="none" stroke="#0000ff" stroke-width="1.1"/><path d="M12.5 11.8l2.9 2.4" stroke="#000080" stroke-width="1.9"/><rect x="5.800" y=".3" width="3.600" height="1.500" fill="#ffff00" stroke="#000" stroke-width=".5"/><rect x="5.200" y="4.200" width="4.800" height="2.300" fill="#ffff00" stroke="#000" stroke-width=".6"/><path d="M7.600 1.800v2.400M7.600 6.500v2.700" stroke="#000" stroke-width=".9"/><rect x="5" y="9.200" width="5.500" height="2.800" fill="#ffff00" stroke="#000" stroke-width=".7"/><path d="M2.200 6.800h1.600" stroke="#c0c0c0"/></svg></div>
<div class="b" style="left:1102.55px;top:145.6px;width:28.75px;height:27px"><svg class="i em" style="left:3.15px;top:2.7px" width="20" height="18.75" viewBox="0 0 16 15"><path d="M2 1h4.200M4.100 1v12M2 13h4.200M.8 5h6.600" stroke="#a0a0a0" stroke-width="1" fill="none"/><rect x="2.300" y="3.900" width="3.600" height="2.300" fill="#a0a0a0"/><rect x="2.300" y="8.400" width="3.600" height="2.400" fill="#a0a0a0"/><path d="M10.800 2v9M8.800 5.500h4" stroke="#a0a0a0" stroke-width="1"/><path d="M8.800 9.200l2 2.800l2-2.800z" fill="#a0a0a0"/></svg></div>
<div class="b" style="left:1131.3px;top:145.6px;width:28.75px;height:27px"><svg class="i em" style="left:3.15px;top:2.7px" width="20" height="18.75" viewBox="0 0 16 15"><path d="M2 1h4.200M4.100 1v12M2 13h4.200M.8 5h6.600" stroke="#a0a0a0" stroke-width="1" fill="none"/><rect x="2.300" y="3.900" width="3.600" height="2.300" fill="#a0a0a0"/><rect x="2.300" y="8.400" width="3.600" height="2.400" fill="#a0a0a0"/><path d="M10.800 3.600v7M8.600 3.600h4.400M8.600 11.900h4.400" stroke="#a0a0a0" stroke-width="1"/><path d="M9 8.200l1.800 2.600l1.800-2.600z" fill="#a0a0a0"/></svg></div>
<div class="b" style="left:1160.05px;top:145.6px;width:28.75px;height:27px"><svg class="i em" style="left:3.15px;top:2.7px" width="20" height="18.75" viewBox="0 0 16 15"><path d="M2 1h4.200M4.100 1v12M2 13h4.200M.8 5h6.600" stroke="#a0a0a0" stroke-width="1" fill="none"/><rect x="2.300" y="3.900" width="3.600" height="2.300" fill="#a0a0a0"/><rect x="2.300" y="8.400" width="3.600" height="2.400" fill="#a0a0a0"/><path d="M9.500 1h2.800v4.500h-2.500v5" fill="none" stroke="#a0a0a0" stroke-width="1"/><path d="M7.800 9.500l2 2.800l2-2.800z" fill="#a0a0a0"/></svg></div>
<div class="b" style="left:1196.3px;top:145.6px;width:28.75px;height:27px"><svg class="i" style="left:3.15px;top:2.7px" width="20" height="18.75" viewBox="0 0 16 15"><rect x="3.400" y="4.200" width="12" height="8.600" fill="#e0e0e0" stroke="#b8b8b8" stroke-width=".8"/><rect x="2.600" y="3.400" width="10.800" height="7.600" fill="#f0f0f0" stroke="#0000ff" stroke-width="1.900"/><rect x="4.600" y="5.600" width="1.100" height="3.200" fill="#ff0000"/><path d="M6.800 5.800v2.900M8.300 5.800v2.900M9.800 5.800v2.900M11.300 5.800v2.900" stroke="#a8a8a8" stroke-width=".8"/></svg></div>
<div class="l" style="left:1233px;top:142px;width:1px;height:34px;background:#a0a0a0"></div>
<div class="l" style="left:1234px;top:142px;width:1px;height:34px;background:#fff"></div>
<div class="l" style="left:0px;top:177.6px;width:1.25px;height:827px;background:#fff"></div>
<div class="l" style="left:221px;top:177.6px;width:1.6px;height:826px;background:#fafafa"></div>
<div class="l" style="left:0px;top:176.4px;width:226px;height:1.2px;background:#fafafa"></div>
<div class="l" style="left:0px;top:1003.4px;width:222px;height:1.25px;background:#a0a0a0"></div>
<div class="l" style="left:5px;top:186.6px;width:185px;height:2.4px;background:#fff"></div>
<div class="l" style="left:5px;top:189px;width:185.8px;height:1.3px;background:#a0a0a0"></div>
<div class="l" style="left:189.6px;top:187.2px;width:1.2px;height:3.1px;background:#a0a0a0"></div>
<div class="l" style="left:5px;top:191.3px;width:185px;height:2.4px;background:#fff"></div>
<div class="l" style="left:5px;top:193.7px;width:185.8px;height:1.3px;background:#a0a0a0"></div>
<div class="l" style="left:189.6px;top:191.9px;width:1.2px;height:3.1px;background:#a0a0a0"></div>
<div class="b" style="left:200px;top:183.1px;width:14.8px;height:14.6px;"></div>
<svg style="left:203.2px;top:185.2px" width="8.4" height="9.2" viewBox="0 0 8.4 9.2"><path d="M0.6 0.6l7.2 8M7.8 0.6l-7.2 8" stroke="#000" stroke-width="1.7" fill="none"/></svg>
<div class="" style="left:7.5px;top:206.8px;width:208.8px;height:760.8px;background:#fff"></div>
<div class="" style="left:7.5px;top:206.8px;width:204.6px;height:3.5px;background:linear-gradient(180deg,#c8c8c8 0,#909090 40%,#646464 70%,#646464 100%)"></div>
<div class="l" style="left:212.2px;top:206.8px;width:2.8px;height:759.4px;background:#f3f3f3"></div>
<div class="l" style="left:7.5px;top:205.3px;width:207.5px;height:1.4px;background:#fbfbfb"></div>
<div class="" style="left:7.5px;top:206.8px;width:2.9px;height:759.4px;background:linear-gradient(90deg,#c8c8c8 0,#909090 40%,#646464 70%,#646464 100%)"></div>
<div class="l" style="left:215px;top:205.4px;width:1.3px;height:762.2px;background:#7c7c7c"></div>
<div class="l" style="left:7.5px;top:966.3px;width:208.8px;height:1.3px;background:#7c7c7c"></div>
<div class="l" style="left:26px;top:222.7px;width:8px;height:1.25px;background:repeating-linear-gradient(90deg,#808080 0,#808080 1.25px,transparent 1.25px,transparent 2.5px)"></div>
<div class="l" style="left:43.8px;top:233px;width:1.25px;height:90.3px;background:repeating-linear-gradient(180deg,#808080 0,#808080 1.25px,transparent 1.25px,transparent 2.5px)"></div>
<svg style="left:14.4px;top:217.3px" width="12" height="12" viewBox="0 0 12 12"><rect x="0.6" y="0.6" width="10.8" height="10.8" fill="#fff" stroke="#808080" stroke-width="1.2"/><path d="M3 6h6" stroke="#000" stroke-width="1.3"/></svg>
<svg style="left:34px;top:213.1px" width="20" height="20" viewBox="0 0 16 16"><path d="M0.5 0.5h11.5l3.5 3.5v11.5h-15z" fill="#00d800" stroke="#222" stroke-width="1"/><circle cx="8" cy="8.5" r="4.6" fill="none" stroke="#e00000" stroke-width="0.9"/><path d="M6.5 3l2.5 -1l1.5 3z" fill="#ff00ff" stroke="#000" stroke-width="0.5"/><path d="M4 7l2 2l-2 2l-2-2z" fill="#00e0ff" stroke="#0000c0" stroke-width="0.6"/><circle cx="11" cy="10.5" r="1.6" fill="#ffe000" stroke="#000" stroke-width="0.5"/></svg>
<span class="t ui" style="left:60px;top:216.1px;letter-spacing:0.552px;font-size:15px">QQ：</span>
<span class="t ui" style="left:100px;top:216.1px;letter-spacing:0.392px;font-size:15px">552171145</span>
<span class="t ui" style="left:178px;top:216.1px;font-size:15px;width:32.5px;overflow:hidden">制作变频器通讯</span>
<div class="l" style="left:50px;top:247.7px;width:8px;height:1.25px;background:repeating-linear-gradient(90deg,#808080 0,#808080 1.25px,transparent 1.25px,transparent 2.5px)"></div>
<svg style="left:38.4px;top:242.3px" width="12" height="12" viewBox="0 0 12 12"><rect x="0.6" y="0.6" width="10.8" height="10.8" fill="#fff" stroke="#808080" stroke-width="1.2"/><path d="M3 6h6" stroke="#000" stroke-width="1.3"/><path d="M6 3v6" stroke="#000" stroke-width="1.3"/></svg>
<svg style="left:57.2px;top:237.9px" width="20" height="20.5" viewBox="0 0 16 16.4"><path d="M0.6 0.6h10.4l4 4v10.8h-14.4z" fill="#fff" stroke="#404040" stroke-width="1"/><path d="M1 15.6h14.4v-10" fill="none" stroke="#000" stroke-width="1.2"/><g stroke="#0000ff" stroke-width="1" fill="none"><path d="M1.5 4.5h3M6 4.5h3M11 4.5h2.5M1.5 8.5h3M6 8.5h6M4.5 3v3M6 3v3M4.5 7v3M6 7v3M9 3v3M11 3v3M9 8.5v3.5h4M10.5 11v2M12 11v2"/></g></svg>
<span class="t ui" style="left:84px;top:241.1px;font-size:15px">程序</span>
<div class="l" style="left:50px;top:272.7px;width:8px;height:1.25px;background:repeating-linear-gradient(90deg,#808080 0,#808080 1.25px,transparent 1.25px,transparent 2.5px)"></div>
<svg style="left:38.4px;top:267.3px" width="12" height="12" viewBox="0 0 12 12"><rect x="0.6" y="0.6" width="10.8" height="10.8" fill="#fff" stroke="#808080" stroke-width="1.2"/><path d="M3 6h6" stroke="#000" stroke-width="1.3"/><path d="M6 3v6" stroke="#000" stroke-width="1.3"/></svg>
<svg style="left:57.2px;top:262.9px" width="20" height="20.5" viewBox="0 0 16 16.4"><path d="M0.6 0.6h10.4l4 4v10.8h-14.4z" fill="#fff" stroke="#404040" stroke-width="1"/><path d="M1 15.6h14.4v-10" fill="none" stroke="#000" stroke-width="1.2"/><rect x="2.5" y="2.5" width="3" height="2.6" fill="#ff00ff" stroke="#008000" stroke-width="0.7"/><rect x="8.5" y="2.5" width="3" height="2.6" fill="#ffff00" stroke="#008000" stroke-width="0.7"/><path d="M4 5.5l3 3l3-3M7 8.5l-1.5 4.5h3.5l-1-4" fill="none" stroke="#a000a0" stroke-width="1"/></svg>
<span class="t ui" style="left:84px;top:266.1px;font-size:15px">软元件注释</span>
<div class="l" style="left:50px;top:297.7px;width:8px;height:1.25px;background:repeating-linear-gradient(90deg,#808080 0,#808080 1.25px,transparent 1.25px,transparent 2.5px)"></div>
<svg style="left:38.4px;top:292.3px" width="12" height="12" viewBox="0 0 12 12"><rect x="0.6" y="0.6" width="10.8" height="10.8" fill="#fff" stroke="#808080" stroke-width="1.2"/><path d="M3 6h6" stroke="#000" stroke-width="1.3"/><path d="M6 3v6" stroke="#000" stroke-width="1.3"/></svg>
<svg style="left:57.2px;top:287.9px" width="20" height="20.5" viewBox="0 0 16 16.4"><path d="M0.6 0.6h10.4l4 4v10.8h-14.4z" fill="#fff" stroke="#404040" stroke-width="1"/><path d="M1 15.6h14.4v-10" fill="none" stroke="#000" stroke-width="1.2"/><path d="M4 6.5h3v2h2v-2h2" fill="none" stroke="#e00000" stroke-width="1"/><rect x="5" y="5" width="5" height="5" fill="#707070"/><path d="M3.5 11.5l7-7.5" stroke="#00d000" stroke-width="1.2"/><path d="M9.5 4h2v2" fill="none" stroke="#00d000" stroke-width="1"/></svg>
<span class="t ui" style="left:84px;top:291.1px;font-size:15px">参数</span>
<div class="l" style="left:50px;top:322.7px;width:8px;height:1.25px;background:repeating-linear-gradient(90deg,#808080 0,#808080 1.25px,transparent 1.25px,transparent 2.5px)"></div>
<svg style="left:38.4px;top:317.3px" width="12" height="12" viewBox="0 0 12 12"><rect x="0.6" y="0.6" width="10.8" height="10.8" fill="#fff" stroke="#808080" stroke-width="1.2"/><path d="M3 6h6" stroke="#000" stroke-width="1.3"/><path d="M6 3v6" stroke="#000" stroke-width="1.3"/></svg>
<svg style="left:57.2px;top:312.9px" width="20" height="20.5" viewBox="0 0 16 16.4"><path d="M0.6 0.6h10.4l4 4v10.8h-14.4z" fill="#fff" stroke="#404040" stroke-width="1"/><path d="M1 15.6h14.4v-10" fill="none" stroke="#000" stroke-width="1.2"/><rect x="2.5" y="2.5" width="8" height="9" fill="#fff" stroke="#0000e0" stroke-width="1.2"/><path d="M4 5h5M4 7h5M4 9h3" stroke="#404040" stroke-width="1"/><rect x="8.5" y="9.5" width="4.5" height="3.5" fill="#e00000" stroke="#000" stroke-width="0.6"/><rect x="10.5" y="11" width="3" height="2.5" fill="#606060"/></svg>
<span class="t ui" style="left:84px;top:316.1px;font-size:15px">软元件内存</span>
<div class="" style="left:10.2px;top:945.6px;width:203.4px;height:19.6px;background:#f0f0f0"></div>
<div class="" style="left:31px;top:945.6px;width:114px;height:19.6px;background:#cdcdcd"></div>
<svg style="left:15.5px;top:950px" width="9" height="11" viewBox="0 0 9 11"><path d="M7 1L2 5.5L7 10" fill="none" stroke="#505050" stroke-width="2"/></svg>
<svg style="left:196.5px;top:950px" width="9" height="11" viewBox="0 0 9 11"><path d="M2 1L7 5.5L2 10" fill="none" stroke="#505050" stroke-width="2"/></svg>
<div class="" style="left:7.5px;top:967.4px;width:61.7px;height:30.2px;background:#f0f0f0;border-left:1.25px solid #fff;border-right:2.5px solid #707070;border-bottom:2.5px solid #707070;border-bottom-right-radius:3px"></div>
<span class="t ui" style="left:15px;top:975.6px;font-size:15.2px">工程</span>
<div class="" style="left:226.2px;top:176.4px;width:1691.8px;height:827px;background:#fff"></div>
<div class="" style="left:226.2px;top:176.4px;width:1691.8px;height:2.5px;background:linear-gradient(180deg,#c4c4c4 0,#8a8a8a 45%,#606060 70%,#606060 100%)"></div>
<div class="" style="left:226.2px;top:176.4px;width:3.7px;height:827px;background:linear-gradient(90deg,#c4c4c4 0,#a0a0a0 40%,#686868 60%,#686868 100%)"></div>
<div class="" style="left:1897.4px;top:180px;width:19.6px;height:823.4px;background:#f0f0f0"></div>
<div class="" style="left:1897.6px;top:200.4px;width:18.6px;height:21.2px;background:#cdcdcd"></div>
<svg style="left:1901.5px;top:185.5px" width="11" height="9" viewBox="0 0 11 9"><path d="M1 7L5.5 2L10 7" fill="none" stroke="#505050" stroke-width="2"/></svg>
<svg style="left:1901.5px;top:988.5px" width="11" height="9" viewBox="0 0 11 9"><path d="M1 2L5.5 7L10 2" fill="none" stroke="#505050" stroke-width="2"/></svg>
<span class="m g" style="left:813.75px;top:185.4px">*</span>
<span class="m g" style="left:830.75px;top:180.8px;transform:scale(.8286,1.62);transform-origin:0 46%">&lt;</span>
<span class="c g" style="left:840px;top:180.3px">通讯协议</span>
<span class="m g" style="left:1114px;top:180.8px;transform:scale(.8286,1.62);transform-origin:0 46%">&gt;</span>
<span class="m " style="left:304.75px;top:220.8px">0</span>
<span class="m " style="left:334.475px;top:200.8px">M8002</span>
<span class="m " style="left:877.5px;top:221.05px">MOV</span>
<span class="m " style="left:947.5px;top:221.05px">H0C96</span>
<span class="m " style="left:1035px;top:221.05px">D8120</span>
<span class="m g" style="left:813.75px;top:268.1px">*</span>
<span class="m g" style="left:830.75px;top:263.5px;transform:scale(.8286,1.62);transform-origin:0 46%">&lt;</span>
<span class="c g" style="left:840px;top:263px">通讯格式</span>
<span class="m g" style="left:1114px;top:263.5px;transform:scale(.8286,1.62);transform-origin:0 46%">&gt;</span>
<span class="m " style="left:304.75px;top:303.5px">6</span>
<span class="m " style="left:334.475px;top:283.5px">M8000</span>
<span class="m " style="left:720px;top:303.75px">RS</span>
<span class="m " style="left:790px;top:303.75px">D10</span>
<span class="m " style="left:868.75px;top:303.75px">K12</span>
<span class="m " style="left:947.5px;top:303.75px">D30</span>
<span class="m " style="left:1035px;top:303.75px">K10</span>
<span class="m g" style="left:817.5px;top:350.7px">*</span>
<span class="m g" style="left:834.5px;top:346.1px;transform:scale(.8286,1.62);transform-origin:0 46%">&lt;</span>
<span class="m g" style="left:843.75px;top:346.1px">8</span>
<span class="c g" style="left:852.5px;top:345.6px">位通讯数据模式</span>
<span class="m g" style="left:1114px;top:346.1px;transform:scale(.8286,1.62);transform-origin:0 46%">&gt;</span>
<span class="m " style="left:1035px;top:386.35px">M8161</span>
<div class="" style="left:318.45px;top:364.6px;width:77.8px;height:61.4px;border:2.5px solid #0000c0"></div>
<span class="m g" style="left:821.25px;top:433.4px">*</span>
<span class="m g" style="left:838.25px;top:428.8px;transform:scale(.8286,1.62);transform-origin:0 46%">&lt;</span>
<span class="c g" style="left:847.5px;top:428.3px">请求通讯</span>
<span class="m g" style="left:912.5px;top:428.8px"> </span>
<span class="c g" style="left:921.25px;top:428.3px">占用一个数据</span>
<span class="m g" style="left:1018.75px;top:428.8px">D10</span>
<span class="m g" style="left:1114px;top:428.8px;transform:scale(.8286,1.62);transform-origin:0 46%">&gt;</span>
<span class="m " style="left:296px;top:468.8px">18</span>
<span class="m " style="left:334.475px;top:448.8px">M8000</span>
<span class="m " style="left:877.5px;top:469.05px">MOV</span>
<span class="m " style="left:947.5px;top:469.05px">H5</span>
<span class="m " style="left:1035px;top:469.05px">D10</span>
<span class="m g" style="left:822.5px;top:516px">*</span>
<span class="m g" style="left:839.5px;top:511.4px;transform:scale(.8286,1.62);transform-origin:0 46%">&lt;</span>
<span class="c g" style="left:848.75px;top:510.9px">变频器站号占用两个数据</span>
<span class="m g" style="left:1027.5px;top:511.4px">D11 D12</span>
<span class="m g" style="left:1114px;top:511.4px;transform:scale(.8286,1.62);transform-origin:0 46%">&gt;</span>
<span class="m " style="left:877.5px;top:551.65px">MOV</span>
<span class="m " style="left:947.5px;top:551.65px">H30</span>
<span class="m " style="left:1035px;top:551.65px">D11</span>
<span class="m g" style="left:821.25px;top:598.6px">*</span>
<span class="m g" style="left:838.25px;top:594px;transform:scale(.8286,1.62);transform-origin:0 46%">&lt;</span>
<span class="c g" style="left:847.5px;top:593.5px">变频器站号为</span>
<span class="m g" style="left:945px;top:594px">H30H31 10</span>
<span class="c g" style="left:1023.75px;top:593.5px">进制</span>
<span class="m g" style="left:1056.25px;top:594px">1</span>
<span class="c g" style="left:1065px;top:593.5px">号站</span>
<span class="m g" style="left:1114px;top:594px;transform:scale(.8286,1.62);transform-origin:0 46%">&gt;</span>
<span class="m " style="left:877.5px;top:634.25px">MOV</span>
<span class="m " style="left:947.5px;top:634.25px">H31</span>
<span class="m " style="left:1035px;top:634.25px">D12</span>
<span class="m g" style="left:812.5px;top:681.2px">*</span>
<span class="m g" style="left:829.5px;top:676.6px;transform:scale(.8286,1.62);transform-origin:0 46%">&lt;</span>
<span class="m g" style="left:838.75px;top:676.6px">ASCII</span>
<span class="c g" style="left:882.5px;top:676.1px">码</span>
<span class="m g" style="left:898.75px;top:676.6px">F 16</span>
<span class="c g" style="left:933.75px;top:676.1px">进制</span>
<span class="m g" style="left:966.25px;top:676.6px">H46</span>
<span class="m g" style="left:1114px;top:676.6px;transform:scale(.8286,1.62);transform-origin:0 46%">&gt;</span>
<span class="m " style="left:296px;top:716.6px">34</span>
<span class="m " style="left:338.85px;top:696.6px">X007</span>
<span class="m " style="left:417.6px;top:696.6px">X013</span>
<span class="m " style="left:496.35px;top:696.6px">X010</span>
<span class="m " style="left:877.5px;top:716.85px">MOV</span>
<span class="m " style="left:947.5px;top:716.85px">H46</span>
<span class="m " style="left:1035px;top:716.85px">D13</span>
<span class="m g" style="left:812.5px;top:763.8px">*</span>
<span class="m g" style="left:829.5px;top:759.2px;transform:scale(.8286,1.62);transform-origin:0 46%">&lt;</span>
<span class="m g" style="left:838.75px;top:759.2px">ASCII</span>
<span class="c g" style="left:882.5px;top:758.7px">码</span>
<span class="m g" style="left:898.75px;top:759.2px">A 16</span>
<span class="c g" style="left:933.75px;top:758.7px">进制</span>
<span class="m g" style="left:966.25px;top:759.2px">H41</span>
<span class="m g" style="left:1114px;top:759.2px;transform:scale(.8286,1.62);transform-origin:0 46%">&gt;</span>
<span class="m " style="left:338.85px;top:779.2px">X010</span>
<span class="m " style="left:417.6px;top:779.2px">X007</span>
<span class="m " style="left:496.35px;top:779.2px">X013</span>
<span class="m " style="left:877.5px;top:799.45px">MOV</span>
<span class="m " style="left:947.5px;top:799.45px">H41</span>
<span class="m " style="left:1035px;top:799.45px">D14</span>
<span class="m " style="left:338.85px;top:841.7px">X013</span>
<span class="m " style="left:417.6px;top:841.7px">X007</span>
<span class="m " style="left:496.35px;top:841.7px">X010</span>
<span class="m " style="left:296px;top:924.2px">58</span>
<span class="m " style="left:334.475px;top:904.2px">M8000</span>
<span class="m " style="left:877.5px;top:924.45px">MOV</span>
<span class="m " style="left:947.5px;top:924.45px">H31</span>
<span class="m " style="left:1035px;top:924.45px">D15</span>
<span class="m " style="left:296px;top:986.6px">64</span>
<span class="m " style="left:338.85px;top:966.6px">X013</span>
<span class="m " style="left:877.5px;top:986.85px">MOV</span>
<span class="m " style="left:947.5px;top:986.85px">H30</span>
<span class="m " style="left:1035px;top:986.85px">D16</span>
<svg style="left:0;top:0;overflow:hidden" width="1897" height="1003.4" viewBox="0 0 1897 1003.4" fill="none"><path d="M318.25 179L318.25 1003" stroke="#141414" stroke-width="1.3"/><path d="M1123.25 179L1123.25 1003" stroke="#141414" stroke-width="1.3"/><path d="M350.75 220.7L350.75 240.1" stroke="#141414" stroke-width="1.3"/><path d="M362.95 220.7L362.95 240.1" stroke="#141414" stroke-width="1.3"/><path d="M318.25 230.5L350.75 230.5" stroke="#141414" stroke-width="1.3"/><path d="M362.95 230.5L872.5 230.5" stroke="#141414" stroke-width="1.3"/><path d="M877.5 222.1H872.5V239.5H877.5" fill="none" stroke="#141414" stroke-width="1.3"/><path d="M1115 222.1H1120V239.5H1115" fill="none" stroke="#141414" stroke-width="1.3"/><path d="M1120 230.5L1123.25 230.5" stroke="#141414" stroke-width="1.3"/><path d="M350.75 303.4L350.75 322.8" stroke="#141414" stroke-width="1.3"/><path d="M362.95 303.4L362.95 322.8" stroke="#141414" stroke-width="1.3"/><path d="M318.25 313.2L350.75 313.2" stroke="#141414" stroke-width="1.3"/><path d="M362.95 313.2L715.5 313.2" stroke="#141414" stroke-width="1.3"/><path d="M720.5 304.8H715.5V322.2H720.5" fill="none" stroke="#141414" stroke-width="1.3"/><path d="M1115 304.8H1120V322.2H1115" fill="none" stroke="#141414" stroke-width="1.3"/><path d="M1120 313.2L1123.25 313.2" stroke="#141414" stroke-width="1.3"/><path d="M397 313.2L397 395.8" stroke="#141414" stroke-width="1.3"/><path d="M397 395.8L1029 395.8" stroke="#141414" stroke-width="1.3"/><path d="M1033.5 387.2q-4.5 2 -4.5 8.6q0 6.6 4.5 9" fill="none" stroke="#141414" stroke-width="1.3"/><path d="M1115.5 387.2q4.5 2 4.5 8.6q0 6.6 -4.5 9" fill="none" stroke="#141414" stroke-width="1.3"/><path d="M1120 395.8L1123.25 395.8" stroke="#141414" stroke-width="1.3"/><path d="M350.75 468.7L350.75 488.1" stroke="#141414" stroke-width="1.3"/><path d="M362.95 468.7L362.95 488.1" stroke="#141414" stroke-width="1.3"/><path d="M318.25 478.5L350.75 478.5" stroke="#141414" stroke-width="1.3"/><path d="M362.95 478.5L872.5 478.5" stroke="#141414" stroke-width="1.3"/><path d="M877.5 470.1H872.5V487.5H877.5" fill="none" stroke="#141414" stroke-width="1.3"/><path d="M1115 470.1H1120V487.5H1115" fill="none" stroke="#141414" stroke-width="1.3"/><path d="M1120 478.5L1123.25 478.5" stroke="#141414" stroke-width="1.3"/><path d="M397 478.5L397 643.7" stroke="#141414" stroke-width="1.3"/><path d="M397 561.1L872.5 561.1" stroke="#141414" stroke-width="1.3"/><path d="M877.5 552.7H872.5V570.1H877.5" fill="none" stroke="#141414" stroke-width="1.3"/><path d="M1115 552.7H1120V570.1H1115" fill="none" stroke="#141414" stroke-width="1.3"/><path d="M1120 561.1L1123.25 561.1" stroke="#141414" stroke-width="1.3"/><path d="M397 643.7L872.5 643.7" stroke="#141414" stroke-width="1.3"/><path d="M877.5 635.3H872.5V652.7H877.5" fill="none" stroke="#141414" stroke-width="1.3"/><path d="M1115 635.3H1120V652.7H1115" fill="none" stroke="#141414" stroke-width="1.3"/><path d="M1120 643.7L1123.25 643.7" stroke="#141414" stroke-width="1.3"/><path d="M350.75 716.5L350.75 735.9" stroke="#141414" stroke-width="1.3"/><path d="M362.95 716.5L362.95 735.9" stroke="#141414" stroke-width="1.3"/><path d="M356.85 722.3L356.85 735.7" stroke="#141414" stroke-width="1.3"/><path d="M356.85 717.5l2.3 6.6h-4.6z" fill="#000"/><path d="M318.25 726.3L350.75 726.3" stroke="#141414" stroke-width="1.3"/><path d="M429.5 716.5L429.5 735.9" stroke="#141414" stroke-width="1.3"/><path d="M441.7 716.5L441.7 735.9" stroke="#141414" stroke-width="1.3"/><path d="M422.1 736.3L447.1 717.5" stroke="#141414" stroke-width="1.2"/><path d="M362.95 726.3L429.5 726.3" stroke="#141414" stroke-width="1.3"/><path d="M508.25 716.5L508.25 735.9" stroke="#141414" stroke-width="1.3"/><path d="M520.45 716.5L520.45 735.9" stroke="#141414" stroke-width="1.3"/><path d="M500.85 736.3L525.85 717.5" stroke="#141414" stroke-width="1.2"/><path d="M441.7 726.3L508.25 726.3" stroke="#141414" stroke-width="1.3"/><path d="M520.45 726.3L872.5 726.3" stroke="#141414" stroke-width="1.3"/><path d="M877.5 717.9H872.5V735.3H877.5" fill="none" stroke="#141414" stroke-width="1.3"/><path d="M1115 717.9H1120V735.3H1115" fill="none" stroke="#141414" stroke-width="1.3"/><path d="M1120 726.3L1123.25 726.3" stroke="#141414" stroke-width="1.3"/><path d="M350.75 799.1L350.75 818.5" stroke="#141414" stroke-width="1.3"/><path d="M362.95 799.1L362.95 818.5" stroke="#141414" stroke-width="1.3"/><path d="M356.85 804.9L356.85 818.3" stroke="#141414" stroke-width="1.3"/><path d="M356.85 800.1l2.3 6.6h-4.6z" fill="#000"/><path d="M318.25 808.9L350.75 808.9" stroke="#141414" stroke-width="1.3"/><path d="M429.5 799.1L429.5 818.5" stroke="#141414" stroke-width="1.3"/><path d="M441.7 799.1L441.7 818.5" stroke="#141414" stroke-width="1.3"/><path d="M422.1 818.9L447.1 800.1" stroke="#141414" stroke-width="1.2"/><path d="M362.95 808.9L429.5 808.9" stroke="#141414" stroke-width="1.3"/><path d="M508.25 799.1L508.25 818.5" stroke="#141414" stroke-width="1.3"/><path d="M520.45 799.1L520.45 818.5" stroke="#141414" stroke-width="1.3"/><path d="M500.85 818.9L525.85 800.1" stroke="#141414" stroke-width="1.2"/><path d="M441.7 808.9L508.25 808.9" stroke="#141414" stroke-width="1.3"/><path d="M520.45 808.9L872.5 808.9" stroke="#141414" stroke-width="1.3"/><path d="M877.5 800.5H872.5V817.9H877.5" fill="none" stroke="#141414" stroke-width="1.3"/><path d="M1115 800.5H1120V817.9H1115" fill="none" stroke="#141414" stroke-width="1.3"/><path d="M1120 808.9L1123.25 808.9" stroke="#141414" stroke-width="1.3"/><path d="M350.75 861.6L350.75 881" stroke="#141414" stroke-width="1.3"/><path d="M362.95 861.6L362.95 881" stroke="#141414" stroke-width="1.3"/><path d="M356.85 867.4L356.85 880.8" stroke="#141414" stroke-width="1.3"/><path d="M356.85 862.6l2.3 6.6h-4.6z" fill="#000"/><path d="M318.25 871.4L350.75 871.4" stroke="#141414" stroke-width="1.3"/><path d="M429.5 861.6L429.5 881" stroke="#141414" stroke-width="1.3"/><path d="M441.7 861.6L441.7 881" stroke="#141414" stroke-width="1.3"/><path d="M422.1 881.4L447.1 862.6" stroke="#141414" stroke-width="1.2"/><path d="M362.95 871.4L429.5 871.4" stroke="#141414" stroke-width="1.3"/><path d="M508.25 861.6L508.25 881" stroke="#141414" stroke-width="1.3"/><path d="M520.45 861.6L520.45 881" stroke="#141414" stroke-width="1.3"/><path d="M500.85 881.4L525.85 862.6" stroke="#141414" stroke-width="1.2"/><path d="M441.7 871.4L508.25 871.4" stroke="#141414" stroke-width="1.3"/><path d="M520.45 871.4L554.5 871.4" stroke="#141414" stroke-width="1.3"/><path d="M554.5 726.3L554.5 871.4" stroke="#141414" stroke-width="1.3"/><path d="M350.75 924.1L350.75 943.5" stroke="#141414" stroke-width="1.3"/><path d="M362.95 924.1L362.95 943.5" stroke="#141414" stroke-width="1.3"/><path d="M318.25 933.9L350.75 933.9" stroke="#141414" stroke-width="1.3"/><path d="M362.95 933.9L872.5 933.9" stroke="#141414" stroke-width="1.3"/><path d="M877.5 925.5H872.5V942.9H877.5" fill="none" stroke="#141414" stroke-width="1.3"/><path d="M1115 925.5H1120V942.9H1115" fill="none" stroke="#141414" stroke-width="1.3"/><path d="M1120 933.9L1123.25 933.9" stroke="#141414" stroke-width="1.3"/><path d="M350.75 986.5L350.75 1005.9" stroke="#141414" stroke-width="1.3"/><path d="M362.95 986.5L362.95 1005.9" stroke="#141414" stroke-width="1.3"/><path d="M356.85 992.3L356.85 1005.7" stroke="#141414" stroke-width="1.3"/><path d="M356.85 987.5l2.3 6.6h-4.6z" fill="#000"/><path d="M318.25 996.3L350.75 996.3" stroke="#141414" stroke-width="1.3"/><path d="M362.95 996.3L872.5 996.3" stroke="#141414" stroke-width="1.3"/><path d="M877.5 987.9H872.5V1005.3H877.5" fill="none" stroke="#141414" stroke-width="1.3"/><path d="M1115 987.9H1120V1005.3H1115" fill="none" stroke="#141414" stroke-width="1.3"/><path d="M1120 996.3L1123.25 996.3" stroke="#141414" stroke-width="1.3"/><path d="M397 996.3L397 1003" stroke="#141414" stroke-width="1.3"/></svg>
<div class="l" style="left:0px;top:1004.6px;width:1920px;height:2.5px;background:#fff"></div>
<div class="pane" style="left:1117.5px;top:1009.4px;width:106.1px;height:21px;"></div>
<span class="t ui" style="left:1119.9px;top:1011.6px;letter-spacing:-0.167px;font-size:15px">FX2N(C)</span>
<div class="pane" style="left:1228px;top:1009.4px;width:193px;height:21px;"></div>
<span class="t ui" style="left:1231px;top:1011.6px;font-size:15px">本站</span>
<div class="pane" style="left:1441.4px;top:1009.4px;width:118.6px;height:21px;"></div>
<div class="pane" style="left:1564.5px;top:1009.4px;width:93px;height:21px;"></div>
<div class="pane" style="left:1661.5px;top:1009.4px;width:68.5px;height:21px;"></div>
<span class="t ui" style="left:1664.5px;top:1011.6px;font-size:15px">改写</span>
<div class="pane" style="left:1734px;top:1009.4px;width:51.5px;height:21px;"></div>
<div class="pane" style="left:1789px;top:1009.4px;width:35px;height:21px;"></div>
<div class="pane" style="left:1827.6px;top:1009.4px;width:44.4px;height:21px;"></div>
<span class="t ui" style="left:1830.6px;top:1011.6px;letter-spacing:1.143px;font-size:15px">NUM</span>
<div class="pane" style="left:1876px;top:1009.4px;width:44px;height:21px;"></div>
<span class="t ui" style="left:2px;top:1013.2px;font-size:15px">准备完毕</span>
<div class="" style="left:0px;top:1030px;width:1920px;height:50px;background:#0b1f3a"></div>
<div class="" style="left:308px;top:1030px;width:61px;height:50px;background:#0b3563"></div>
<div class="" style="left:251px;top:1077px;width:51px;height:3px;background:#7f9cc0"></div>
<div class="" style="left:308px;top:1077px;width:61px;height:3px;background:#7f9cc0"></div>
<div class="" style="left:375px;top:1077px;width:51px;height:3px;background:#7f9cc0"></div>
<div class="" style="left:437px;top:1077px;width:51px;height:3px;background:#7f9cc0"></div>
<svg style="left:19.5px;top:1044.5px" width="21" height="21" viewBox="0 0 21 21" fill="#fff"><path d="M0 3.2L8.6 2v8H0zM9.6 1.9L21 0.3V10H9.6zM0 11h8.6v8L0 17.8zM9.6 11H21v9.7L9.6 19.1z"/></svg>
<svg style="left:79px;top:1044px" width="22" height="22" viewBox="0 0 22 22"><circle cx="11" cy="11" r="8.6" fill="none" stroke="#fff" stroke-width="2.6"/></svg>
<svg style="left:139px;top:1044px" width="22" height="22" viewBox="0 0 22 22" fill="none" stroke="#fff" stroke-width="1.3"><path d="M1 1v3M1 18v3M13.5 1v3M13.5 18v3M1 4h12.5M1 18h12.5"/><rect x="1" y="6.5" width="12.5" height="9"/><path d="M19 1v8M19 13v8"/><rect x="18" y="9.5" width="2" height="2.5" fill="#fff" stroke="none"/></svg>
<svg style="left:198px;top:1039px" width="31" height="32" viewBox="0 0 31 32"><path d="M9.5 9V6a6 5.5 0 0 1 12 0v3" fill="none" stroke="#fff" stroke-width="1.3"/><path d="M11.5 9V6.5a4 4 0 0 1 8 0V9" fill="none" stroke="#cfd6e0" stroke-width="1"/><path d="M1 8.5h29v19.5a2 2 0 0 1-2 2H3a2 2 0 0 1-2-2z" fill="#fff"/><rect x="9.2" y="12.8" width="5.6" height="5.6" fill="#f25022"/><rect x="15.8" y="12.8" width="5.6" height="5.6" fill="#7fba00"/><rect x="9.2" y="19.4" width="5.6" height="5.6" fill="#00a4ef"/><rect x="15.8" y="19.4" width="5.6" height="5.6" fill="#ffb900"/></svg>
<svg style="left:261px;top:1040px" width="31" height="31" viewBox="0 0 31 31"><defs><linearGradient id="qg" x1="0" y1="0" x2="0" y2="1"><stop offset="0" stop-color="#1f8fff"/><stop offset="0.55" stop-color="#28a8ff"/><stop offset="1" stop-color="#e8f4ff"/></linearGradient></defs><circle cx="15" cy="14.5" r="11" fill="none" stroke="url(#qg)" stroke-width="6.4"/><path d="M14 27.5a4.5 4.5 0 0 1 1-8.8a6 6 0 0 1 10.5-1a4.6 4.6 0 0 1 1 9.8z" fill="#fff"/></svg>
<svg style="left:323px;top:1040px" width="30" height="30" viewBox="0 0 20 20"><path d="M6 0h8l6 6v8l-6 6H6l-6-6V6z" fill="#050505"/><path d="M13.500 12.500l6.500-1v2.500l-6 6h-3z" fill="#86822a"/><path d="M1.500 2.500h5.500v2.500h-3v6h1.500v-3h2v5.500h-6z" fill="#f00000"/><path d="M8.500 10h3.800v5h-2v3.800h-1.800zM10.300 11.500v2h.8v-2z" fill="#f4f4f4"/><path d="M13 8.500h5.500v1.500h-3.500v1.500h3.500l1 1v1h-6.500z" fill="#fff"/><path d="M8 3.500h2M11 2.500h1.500M13 4h4M11.500 5.500h1.500" stroke="#fff" stroke-width="1.100"/><path d="M9 18.500h3v1h-3z" fill="#c00070"/><path d="M15 9.500l3 1" stroke="#2030c0" stroke-width="1"/></svg>
<svg style="left:387px;top:1042px" width="27" height="28" viewBox="0 0 27 28"><path d="M0.5 13.5C1.5 5.5 7 0.5 14 0.5c8 0 12.5 5.5 12.5 13v3H9.2c0.3 4.2 3.6 6 7.6 6c3 0 5.6-0.8 7.8-2v5.5c-2.6 1.3-5.6 2-9 2C7.500 28 3 23.500 3 16.700c0-4 2-7.300 5.200-9.200C4.500 8.300 1.800 10.500 0.500 13.500zM9.400 11.500h9.400c0-3-1.700-5-4.500-5c-2.700 0-4.500 2-4.900 5z" fill="#1b86d8"/></svg>
<svg style="left:447px;top:1040px" width="30" height="30" viewBox="0 0 30 30"><rect width="30" height="30" rx="2.5" fill="#04070c"/><g fill="none" stroke="#1c9fdc" stroke-width="1.7"><ellipse cx="15" cy="15" rx="11.5" ry="4.4" transform="rotate(-8 15 15)"/><ellipse cx="15" cy="15" rx="11.5" ry="4.4" transform="rotate(58 15 15)"/><ellipse cx="15" cy="15" rx="11.5" ry="4.4" transform="rotate(118 15 15)"/></g></svg>
<svg style="left:1540px;top:1030px" width="380" height="50" viewBox="0 0 380 50" fill="none" stroke="#fff" stroke-width="1.3"><path d="M5.5 28.5l7-7l7 7"/><rect x="33.500" y="15.500" width="18" height="15" fill="#e6e9ee"/><path d="M38 34h9M42.500 30.500v3"/><g stroke="#0b1f3a"><circle cx="42.500" cy="23" r="2.600" fill="none" stroke-width="1.500"/><path d="M42.500 17v2.500M42.500 26.500V29M36.500 23h2.500M46 23h2.500M38.300 18.800l1.800 1.800M44.900 25.400l1.800 1.800M38.300 27.200l1.800-1.800M44.900 20.600l1.800-1.800" stroke-width="1.700"/></g><rect x="66.500" y="20.500" width="15.500" height="9" fill="#e6e9ee"/><path d="M82.500 23v4" stroke-width="1.6"/><path d="M64.500 17.500v3M67.500 17.500v3M63.500 20.500h5v2.500a2.500 2.500 0 0 1-5 0zM66 25.500v3" stroke-width="1.1"/><g stroke="#c8ced6"><path d="M96.500 33a14 14 0 0 1 14-14" /><path d="M100.500 33a10 10 0 0 1 10-10"/><path d="M104.500 33a6 6 0 0 1 6-6"/></g><circle cx="109.500" cy="32" r="1.500" fill="#fff" stroke="none"/><path d="M124.500 21.500h3.500l5-4.500v15l-5-4.500h-3.500z"/><path d="M137 21l6 6M143 21l-6 6"/></svg>
<span class="t" style="left:1693.5px;top:1045.6px;font-size:18.2px;color:#fff">英</span>
<div class="" style="left:1728.6px;top:1045.4px;width:18.6px;height:18.6px;background:#fff"></div>
<span class="t" style="left:1730.2px;top:1046.5px;font-size:18.5px;color:#0b1f3a">M</span>
<span class="t ui" style="left:1788px;top:1035.5px;letter-spacing:-0.059px;color:#fff;font-size:15.5px">16:00</span>
<span class="t ui" style="left:1770.5px;top:1058.8px;letter-spacing:0.559px;color:#fff;font-size:15.5px">2019/7/18</span>
<svg style="left:1868px;top:1044px" width="22" height="22" viewBox="0 0 22 22" fill="none" stroke="#fff" stroke-width="1.3"><path d="M1.500 1.500h19v14.500h-6l-3.500 3.500v-3.500h-9.500z"/></svg>
<div class="l" style="left:1914px;top:1030px;width:1px;height:50px;background:#5a6a80"></div>
</body>
</html>
